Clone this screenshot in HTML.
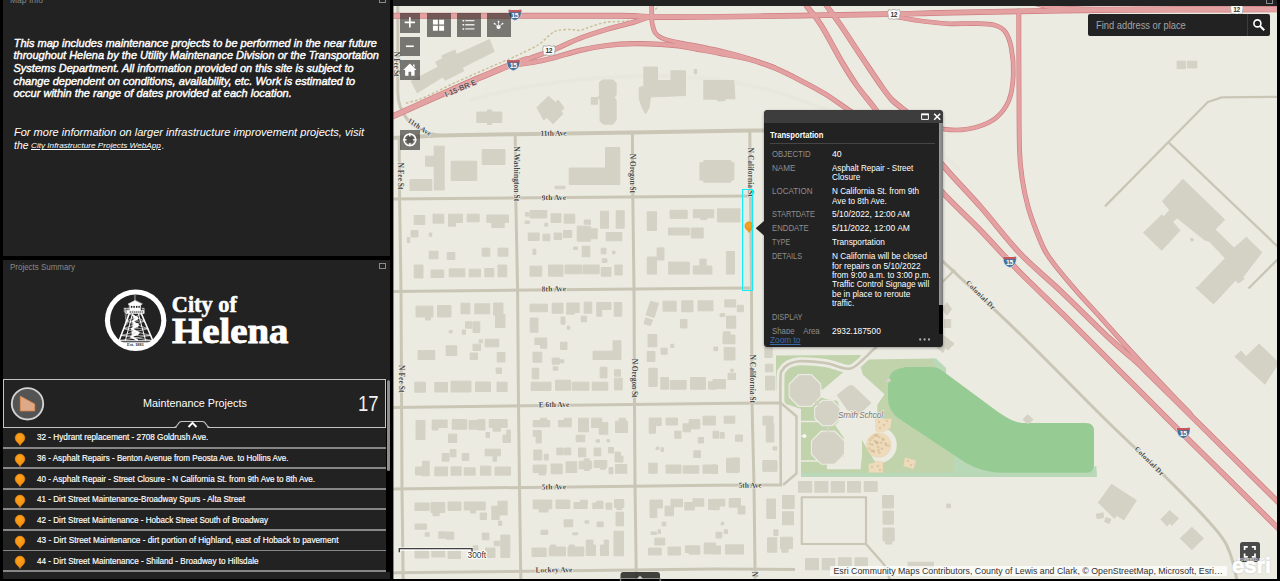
<!DOCTYPE html><html><head><meta charset="utf-8"><title>Maintenance Projects</title>
<style>html,body{margin:0;padding:0}body{width:1280px;height:581px;background:#000;overflow:hidden;position:relative;font-family:"Liberation Sans",sans-serif}svg{display:block;overflow:hidden}</style></head><body>
<div style="position:absolute;left:3px;top:0;width:387px;height:256.4px;background:#222222;overflow:hidden"></div>
<div style="position:absolute;left:3px;top:260px;width:387px;height:318.5px;background:#222222"></div>
<div style="position:absolute;left:379px;top:263px;width:5px;height:3.5px;border:1px solid #8a8a8a;border-top-width:1.6px"></div>
<div style="position:absolute;left:379px;top:-4px;width:5px;height:5px;border:1px solid #8a8a8a"></div>
<svg style="position:absolute;left:100px;top:284px" width="72" height="72" viewBox="0 0 581 581">
<defs><clipPath id="lc"><rect x="0" y="0" width="581" height="470"/></clipPath></defs>
<circle cx="287.5" cy="292.5" r="248" fill="#fff"/>
<circle cx="287.5" cy="292.5" r="207" fill="#222" clip-path="url(#lc)"/>
<g stroke="#fff" fill="none" stroke-linecap="round" stroke-linejoin="round">
<path d="M282 92V140" stroke-width="5"/>
<path d="M282 133L226 162L240 171H326L340 162Z" fill="#fff" stroke-width="4"/>
<path d="M238 170H328V216H238Z" fill="#fff" stroke-width="3"/>
<path d="M214 214H354V238H214Z" fill="#fff" stroke-width="4"/>
<path d="M196 196H236M196 196V226L214 238M206 198V232M218 198V214M340 196H356V236M346 198V214M228 198V214" stroke-width="5"/>
<path d="M203 240L212 330M216 240L222 322" stroke-width="4"/>
<path d="M236 240L155 456M334 240L426 456" stroke-width="13"/>
<path d="M262 240L205 456M310 240L368 456" stroke-width="8"/>
<path d="M213 300H360M190 360H386M170 415H409" stroke-width="4"/><path d="M150 458H432" stroke-width="8"/>
<path d="M236 240L360 300M334 240L213 300M213 300L386 360M360 300L190 360M190 360L409 415M386 360L170 415M170 415L426 456M409 415L155 456" stroke-width="5"/>
<path d="M266 252L302 276L262 302L306 332L256 362L312 396L250 426L300 452" stroke-width="15"/>
<path d="M270 262h34v30h-34zM262 318h46v34h-46zM256 378h52v36h-52z" fill="#fff" stroke-width="2" opacity=".9"/>
</g>
<g fill="#222"><rect x="249" y="177" width="12" height="15"/><rect x="269" y="177" width="12" height="15"/><rect x="290" y="177" width="12" height="15"/><rect x="310" y="177" width="11" height="15"/>
<rect x="240" y="220" width="8" height="12"/><rect x="256" y="220" width="8" height="12"/><rect x="272" y="220" width="8" height="12"/><rect x="288" y="220" width="8" height="12"/><rect x="304" y="220" width="8" height="12"/><rect x="320" y="220" width="8" height="12"/><rect x="336" y="220" width="8" height="12"/></g>
</svg>
<div style="position:absolute;left:3px;top:378.8px;width:383px;height:48.8px;border:1.2px solid #c4c4c4;box-sizing:border-box;background:#222"></div>
<div style="position:absolute;left:386px;top:380px;width:4px;height:191.5px;background:#000"></div>
<div style="position:absolute;left:386.5px;top:380px;width:3.2px;height:90.5px;background:#8c8c8c;border-radius:1.5px"></div>
<svg style="position:absolute;left:9px;top:385px" width="38" height="38" viewBox="9 385 38 38">
<circle cx="27.5" cy="403.8" r="15.7" fill="#545454" stroke="#d2d2d2" stroke-width="1.9"/>
<path d="M20.3 396.2L34.7 404V410.9H20.3Z" fill="#dcaa8b" stroke="#e08b48" stroke-width="0.9" stroke-linejoin="round"/>
</svg>
<svg style="position:absolute;left:173px;top:419px" width="38" height="11" viewBox="173 419 38 11">
<path d="M174.6 428.6C178.4 428.6 177 421.5 181.6 421.5H202.4C207 421.5 205.6 428.6 209.4 428.6Z" fill="#222"/>
<path d="M174.2 427.4C178.4 427.4 177 421.5 181.6 421.5H202.4C207 421.5 205.6 427.4 209.8 427.4" fill="none" stroke="#c4c4c4" stroke-width="1.1"/>
<path d="M188.5 427L192.5 422.9L196.5 427" fill="none" stroke="#fff" stroke-width="1.9"/>
</svg>
<div style="position:absolute;left:3px;top:446.75px;width:383px;height:1.9px;background:#878787"></div>
<svg style="position:absolute;left:13.00px;top:431.10px" width="14.00" height="16.00" viewBox="-7 -7 14 16"><defs><radialGradient id="pg" cx="45%" cy="30%" r="75%"><stop offset="0" stop-color="#ffa31f"/><stop offset="1" stop-color="#f18a06"/></radialGradient></defs><path d="M0 7.7C-1 4.9 -4.9 3.7 -4.9 0A4.9 4.9 0 1 1 4.9 0C4.9 3.7 1 4.9 0 7.7Z" fill="url(#pg)" stroke="#e08310" stroke-width="0.5"/></svg>
<div style="position:absolute;left:3px;top:467.30px;width:383px;height:1.9px;background:#878787"></div>
<svg style="position:absolute;left:13.00px;top:451.65px" width="14.00" height="16.00" viewBox="-7 -7 14 16"><defs><radialGradient id="pg" cx="45%" cy="30%" r="75%"><stop offset="0" stop-color="#ffa31f"/><stop offset="1" stop-color="#f18a06"/></radialGradient></defs><path d="M0 7.7C-1 4.9 -4.9 3.7 -4.9 0A4.9 4.9 0 1 1 4.9 0C4.9 3.7 1 4.9 0 7.7Z" fill="url(#pg)" stroke="#e08310" stroke-width="0.5"/></svg>
<div style="position:absolute;left:3px;top:487.85px;width:383px;height:1.9px;background:#878787"></div>
<svg style="position:absolute;left:13.00px;top:472.20px" width="14.00" height="16.00" viewBox="-7 -7 14 16"><defs><radialGradient id="pg" cx="45%" cy="30%" r="75%"><stop offset="0" stop-color="#ffa31f"/><stop offset="1" stop-color="#f18a06"/></radialGradient></defs><path d="M0 7.7C-1 4.9 -4.9 3.7 -4.9 0A4.9 4.9 0 1 1 4.9 0C4.9 3.7 1 4.9 0 7.7Z" fill="url(#pg)" stroke="#e08310" stroke-width="0.5"/></svg>
<div style="position:absolute;left:3px;top:508.40px;width:383px;height:1.9px;background:#878787"></div>
<svg style="position:absolute;left:13.00px;top:492.75px" width="14.00" height="16.00" viewBox="-7 -7 14 16"><defs><radialGradient id="pg" cx="45%" cy="30%" r="75%"><stop offset="0" stop-color="#ffa31f"/><stop offset="1" stop-color="#f18a06"/></radialGradient></defs><path d="M0 7.7C-1 4.9 -4.9 3.7 -4.9 0A4.9 4.9 0 1 1 4.9 0C4.9 3.7 1 4.9 0 7.7Z" fill="url(#pg)" stroke="#e08310" stroke-width="0.5"/></svg>
<div style="position:absolute;left:3px;top:528.95px;width:383px;height:1.9px;background:#878787"></div>
<svg style="position:absolute;left:13.00px;top:513.30px" width="14.00" height="16.00" viewBox="-7 -7 14 16"><defs><radialGradient id="pg" cx="45%" cy="30%" r="75%"><stop offset="0" stop-color="#ffa31f"/><stop offset="1" stop-color="#f18a06"/></radialGradient></defs><path d="M0 7.7C-1 4.9 -4.9 3.7 -4.9 0A4.9 4.9 0 1 1 4.9 0C4.9 3.7 1 4.9 0 7.7Z" fill="url(#pg)" stroke="#e08310" stroke-width="0.5"/></svg>
<div style="position:absolute;left:3px;top:549.50px;width:383px;height:1.9px;background:#878787"></div>
<svg style="position:absolute;left:13.00px;top:533.85px" width="14.00" height="16.00" viewBox="-7 -7 14 16"><defs><radialGradient id="pg" cx="45%" cy="30%" r="75%"><stop offset="0" stop-color="#ffa31f"/><stop offset="1" stop-color="#f18a06"/></radialGradient></defs><path d="M0 7.7C-1 4.9 -4.9 3.7 -4.9 0A4.9 4.9 0 1 1 4.9 0C4.9 3.7 1 4.9 0 7.7Z" fill="url(#pg)" stroke="#e08310" stroke-width="0.5"/></svg>
<div style="position:absolute;left:3px;top:570.05px;width:383px;height:1.9px;background:#878787"></div>
<svg style="position:absolute;left:13.00px;top:554.40px" width="14.00" height="16.00" viewBox="-7 -7 14 16"><defs><radialGradient id="pg" cx="45%" cy="30%" r="75%"><stop offset="0" stop-color="#ffa31f"/><stop offset="1" stop-color="#f18a06"/></radialGradient></defs><path d="M0 7.7C-1 4.9 -4.9 3.7 -4.9 0A4.9 4.9 0 1 1 4.9 0C4.9 3.7 1 4.9 0 7.7Z" fill="url(#pg)" stroke="#e08310" stroke-width="0.5"/></svg>
<span style="position:absolute;left:10.00px;top:-3.80px;white-space:pre;font-family:'Liberation Sans',sans-serif;font-size:8.5px;line-height:8.5px;font-weight:400;font-style:normal;color:#858585;">Map Info</span>
<span style="position:absolute;left:10.00px;top:263.00px;white-space:pre;font-family:'Liberation Sans',sans-serif;font-size:8.5px;line-height:8.5px;font-weight:400;font-style:normal;color:#898989;transform:scaleX(0.9361);transform-origin:0 0;">Projects Summary</span>
<span style="position:absolute;left:13.75px;top:37.59px;white-space:pre;font-family:'Liberation Sans',sans-serif;font-size:11px;line-height:11px;font-weight:400;font-style:italic;color:#fff;-webkit-text-stroke:0.42px #fff;">This map includes maintenance projects to be performed in the near future</span>
<span style="position:absolute;left:13.50px;top:50.39px;white-space:pre;font-family:'Liberation Sans',sans-serif;font-size:11px;line-height:11px;font-weight:400;font-style:italic;color:#fff;-webkit-text-stroke:0.42px #fff;">throughout Helena by the Utility Maintenance Division or the Transportation</span>
<span style="position:absolute;left:13.50px;top:62.99px;white-space:pre;font-family:'Liberation Sans',sans-serif;font-size:11px;line-height:11px;font-weight:400;font-style:italic;color:#fff;-webkit-text-stroke:0.42px #fff;">Systems Department. All information provided on this site is subject to</span>
<span style="position:absolute;left:13.50px;top:75.69px;white-space:pre;font-family:'Liberation Sans',sans-serif;font-size:11px;line-height:11px;font-weight:400;font-style:italic;color:#fff;-webkit-text-stroke:0.42px #fff;">change dependent on conditions, availability, etc. Work is estimated to</span>
<span style="position:absolute;left:13.50px;top:88.39px;white-space:pre;font-family:'Liberation Sans',sans-serif;font-size:11px;line-height:11px;font-weight:400;font-style:italic;color:#fff;-webkit-text-stroke:0.42px #fff;">occur within the range of dates provided at each location.</span>
<span style="position:absolute;left:13.75px;top:127.21px;white-space:pre;font-family:'Liberation Sans',sans-serif;font-size:10.5px;line-height:10.5px;font-weight:400;font-style:italic;color:#fff;transform:scaleX(1.0504);transform-origin:0 0;">For more information on larger infrastructure improvement projects, visit</span>
<span style="position:absolute;left:13.75px;top:140.01px;white-space:pre;font-family:'Liberation Sans',sans-serif;font-size:10.5px;line-height:10.5px;font-weight:400;font-style:italic;color:#fff;transform:scaleX(0.9857);transform-origin:0 0;">the</span>
<span style="position:absolute;left:31.25px;top:142.13px;white-space:pre;font-family:'Liberation Sans',sans-serif;font-size:8px;line-height:8px;font-weight:400;font-style:italic;color:#fff;transform:scaleX(1.0219);transform-origin:0 0;text-decoration:underline;text-underline-offset:1px;">City Infrastructure Projects WebApp</span>
<span style="position:absolute;left:161.60px;top:140.01px;white-space:pre;font-family:'Liberation Sans',sans-serif;font-size:10.5px;line-height:10.5px;font-weight:400;font-style:italic;color:#fff;transform:scaleX(0.6845);transform-origin:0 0;">.</span>
<span style="position:absolute;left:127.20px;top:343.45px;white-space:pre;font-family:'Liberation Serif',serif;font-size:4.6px;line-height:4.6px;font-weight:700;font-style:normal;color:#222;transform:scaleX(0.9399);transform-origin:0 0;">Est. 1881</span>
<span style="position:absolute;left:171.80px;top:294.07px;white-space:pre;font-family:'Liberation Serif',serif;font-size:22.3px;line-height:22.3px;font-weight:700;font-style:normal;color:#fff;-webkit-text-stroke:0.55px #fff;">City of</span>
<span style="position:absolute;left:172.00px;top:312.60px;white-space:pre;font-family:'Liberation Serif',serif;font-size:36px;line-height:36px;font-weight:700;font-style:normal;color:#fff;transform:scaleX(1.0779);transform-origin:0 0;-webkit-text-stroke:0.9px #fff;">Helena</span>
<span style="position:absolute;left:143.00px;top:398.03px;white-space:pre;font-family:'Liberation Sans',sans-serif;font-size:11.3px;line-height:11.3px;font-weight:400;font-style:normal;color:#fff;transform:scaleX(0.9554);transform-origin:0 0;">Maintenance Projects</span>
<span style="position:absolute;left:357.70px;top:392.55px;white-space:pre;font-family:'Liberation Sans',sans-serif;font-size:21.2px;line-height:21.2px;font-weight:400;font-style:normal;color:#f0f0f0;transform:scaleX(0.8737);transform-origin:0 0;">17</span>
<span style="position:absolute;left:36.50px;top:433.48px;white-space:pre;font-family:'Liberation Sans',sans-serif;font-size:9px;line-height:9px;font-weight:400;font-style:normal;color:#fff;transform:scaleX(0.9091);transform-origin:0 0;-webkit-text-stroke:0.18px #fff;">32 - Hydrant replacement - 2708 Goldrush Ave.</span>
<span style="position:absolute;left:36.50px;top:454.03px;white-space:pre;font-family:'Liberation Sans',sans-serif;font-size:9px;line-height:9px;font-weight:400;font-style:normal;color:#fff;transform:scaleX(0.8980);transform-origin:0 0;-webkit-text-stroke:0.18px #fff;">36 - Asphalt Repairs - Benton Avenue from Peosta Ave. to Hollins Ave.</span>
<span style="position:absolute;left:36.50px;top:474.58px;white-space:pre;font-family:'Liberation Sans',sans-serif;font-size:9px;line-height:9px;font-weight:400;font-style:normal;color:#fff;transform:scaleX(0.9016);transform-origin:0 0;-webkit-text-stroke:0.18px #fff;">40 - Asphalt Repair - Street Closure - N California St. from 9th Ave to 8th Ave.</span>
<span style="position:absolute;left:36.50px;top:495.13px;white-space:pre;font-family:'Liberation Sans',sans-serif;font-size:9px;line-height:9px;font-weight:400;font-style:normal;color:#fff;transform:scaleX(0.9000);transform-origin:0 0;-webkit-text-stroke:0.18px #fff;">41 - Dirt Street Maintenance-Broadway Spurs - Alta Street</span>
<span style="position:absolute;left:36.50px;top:515.68px;white-space:pre;font-family:'Liberation Sans',sans-serif;font-size:9px;line-height:9px;font-weight:400;font-style:normal;color:#fff;transform:scaleX(0.9018);transform-origin:0 0;-webkit-text-stroke:0.18px #fff;">42 - Dirt Street Maintenance - Hoback Street South of Broadway</span>
<span style="position:absolute;left:36.50px;top:536.23px;white-space:pre;font-family:'Liberation Sans',sans-serif;font-size:9px;line-height:9px;font-weight:400;font-style:normal;color:#fff;transform:scaleX(0.9187);transform-origin:0 0;-webkit-text-stroke:0.18px #fff;">43 - Dirt Street Maintenance - dirt portion of Highland, east of Hoback to pavement</span>
<span style="position:absolute;left:36.50px;top:556.78px;white-space:pre;font-family:'Liberation Sans',sans-serif;font-size:9px;line-height:9px;font-weight:400;font-style:normal;color:#fff;transform:scaleX(0.9036);transform-origin:0 0;-webkit-text-stroke:0.18px #fff;">44 - Dirt Street Maintenance - Shiland - Broadway to Hillsdale</span>
<div style="position:absolute;left:393px;top:0;width:884px;height:6px;background:#222"></div>
<div style="position:absolute;left:1266px;top:-3px;width:5px;height:5px;border:1px solid #8a8a8a"></div>
<svg style="position:absolute;left:393px;top:6px" width="884" height="572.5" viewBox="393 6 884 572.5">
<rect x="393" y="0" width="900" height="600" fill="#ecebe2"/>
<g stroke="#e6e5db" stroke-width="4" fill="none" opacity=".55"><path d="M470 100C560 75 700 62 800 100S930 140 960 170"/></g>
<path d="M776.0 355.5L860.0 355.0L866.0 359.5L933.0 358.5L940.0 372.0L1000.0 416.0L1020.0 428.0L1090.0 428.0L1090.0 470.0L1096.5 471.0L1096.5 476.8L801.0 476.8L801.0 409.0L786.0 404.0L780.0 396.0L776.0 390.0Z" fill="#c0d3ab"/>
<path d="M953.5 452L980 468H1088L1096.5 466V476.8H953.5Z" fill="#b9d8b8"/><rect x="801" y="472.6" width="295.5" height="4.2" fill="#b9d8b8"/>
<path d="M931 358.5L936 358.5L946 368L946 376L938 370Z" fill="#b9d8b8"/>
<path d="M888 386Q888 372 898 369L906 367H931Q938 367 944 372L990 406Q1012 423 1022 423H1086Q1094 423 1094 431V465Q1094 472.7 1086 472.7H1000Q982 472 966 463L898 418Q888 410 888 398Z" fill="#97cb94"/>
<path d="M859.4 362.4L862.9 374.7L884.5 394.2L877.3 404.9L877.3 418.9L875.7 429.8L866.4 437.9L862.9 447.2L866.4 455.3L861.7 457.6L860.6 469.2L826.9 469.2L826.9 464.6L843.9 456.5L843.9 437.9L835.0 425.1L838.5 421.6L839.2 405.8L837.3 400.7L828.1 399.6L819.9 397.3L817.6 391.4L823.4 389.1L839.7 375.2L846.6 369.4Z" fill="#ecebe2"/>
<path d="M800.5 421.6H826M800.5 461H827M800.5 436.2H805" stroke="#ecebe2" stroke-width="1.5" fill="none"/>
<path d="M819.8 396.6L811.1 405.3L798.9 405.3L790.2 396.6L790.2 384.4L798.9 375.7L811.1 375.7L819.8 384.4Z" fill="none" stroke="#ecebe2" stroke-width="3.2" stroke-linejoin="round"/>
<path d="M838.9 417.8L832.1 424.6L822.5 424.6L815.7 417.8L815.7 408.2L822.5 401.4L832.1 401.4L838.9 408.2Z" fill="none" stroke="#ecebe2" stroke-width="3.2" stroke-linejoin="round"/>
<path d="M843.5 454.1L834.4 463.2L821.6 463.2L812.5 454.1L812.5 441.3L821.6 432.2L834.4 432.2L843.5 441.3Z" fill="none" stroke="#ecebe2" stroke-width="3.2" stroke-linejoin="round"/>
<circle cx="878.8" cy="445" r="18" fill="#ecebe2"/>
<path d="M862 440L862 470L880 470Z" fill="#c0d3ab"/>
<circle cx="878.8" cy="445" r="12.3" fill="#eddbbb" stroke="#e6d2ad" stroke-width=".5"/>
<path d="M875.0 418.7L891.7 418.7L890.5 428.0L884.0 431.5L876.0 431.3Z" fill="#eddbbb" stroke="#e6d2ad" stroke-width=".4"/>
<path d="M868.7 464.0L875.0 462.5L876.0 460.5L883.0 462.0L883.0 472.5L869.0 472.5Z" fill="#eddbbb" stroke="#e6d2ad" stroke-width=".4"/>
<path d="M905.0 457.5L916.0 460.5L913.5 469.0L903.5 466.0Z" fill="#eddbbb" stroke="#e6d2ad" stroke-width=".4"/>
<g fill="none" stroke="#c4a77c" stroke-width=".45"><circle cx="879.4" cy="452.7" r=".9"/><circle cx="873.2" cy="451.0" r=".9"/><circle cx="876.9" cy="443.1" r=".9"/><circle cx="888.4" cy="445.8" r=".9"/><circle cx="878.5" cy="450.1" r=".9"/><circle cx="886.0" cy="444.8" r=".9"/><circle cx="882.5" cy="438.8" r=".9"/><circle cx="876.2" cy="441.9" r=".9"/><circle cx="872.3" cy="437.7" r=".9"/><circle cx="869.9" cy="443.7" r=".9"/><circle cx="877.5" cy="442.7" r=".9"/><circle cx="879.2" cy="436.9" r=".9"/><circle cx="878.2" cy="446.8" r=".9"/><circle cx="883.6" cy="439.6" r=".9"/><circle cx="876.9" cy="435.3" r=".9"/><circle cx="876.5" cy="435.2" r=".9"/><circle cx="871.4" cy="450.8" r=".9"/><circle cx="869.3" cy="448.5" r=".9"/><circle cx="881.2" cy="442.7" r=".9"/><circle cx="882.0" cy="448.7" r=".9"/><circle cx="885.6" cy="443.5" r=".9"/><circle cx="874.8" cy="440.9" r=".9"/><circle cx="872.3" cy="444.7" r=".9"/><circle cx="874.0" cy="451.5" r=".9"/><circle cx="870.2" cy="440.0" r=".9"/><circle cx="874.6" cy="435.8" r=".9"/><circle cx="879" cy="422" r=".8"/><circle cx="884" cy="425" r=".8"/><circle cx="887" cy="421" r=".8"/><circle cx="880" cy="428" r=".8"/><circle cx="872" cy="467" r=".8"/><circle cx="878" cy="466" r=".8"/><circle cx="880" cy="470" r=".8"/><circle cx="908" cy="461" r=".8"/><circle cx="911" cy="465" r=".8"/></g>
<path d="M780.8 486.0C780.8 475.0 780.5 438.1 780.5 420.0C780.5 401.9 780.2 385.8 780.5 377.5C780.8 369.2 781.2 372.2 782.5 370.0C783.8 367.8 785.2 366.0 788.0 364.5C790.8 363.0 793.0 361.5 799.2 361.2C805.5 361.0 817.8 361.8 825.5 363.0C833.2 364.2 840.5 368.0 845.5 368.5C850.5 369.0 850.9 369.1 855.5 366.0C860.1 362.9 868.6 354.0 873.0 350.0C877.4 346.0 880.5 343.3 882.0 342.0" stroke="#ecebe2" stroke-width="8" fill="none"/>
<path d="M781.75 403.75L796.5 416.25V473.5L783 485" stroke="#ecebe2" stroke-width="5" fill="none"/>
<path d="M397.8 0V92C398 112 410 131 438.5 135.2" stroke="#c9c6b6" stroke-width="3.0" fill="none" stroke-linejoin="round"/>
<path d="M385.0 138.4L438.0 135.4L515.0 134.2L632.0 132.4L750.0 130.6L770.0 130.3" stroke="#c9c6b6" stroke-width="4.0" fill="none" stroke-linejoin="round"/>
<path d="M399.2 138.0L399.6 199.0L401.0 291.5L401.6 407.0L402.0 489.0L403.2 585.0" stroke="#c9c6b6" stroke-width="3.0" fill="none" stroke-linejoin="round"/>
<path d="M515.2 134.0L515.8 199.0L517.6 291.0L518.5 406.0L519.5 488.0L520.9 585.0" stroke="#c9c6b6" stroke-width="3.0" fill="none" stroke-linejoin="round"/>
<path d="M632.4 132.5L632.8 197.0L634.0 289.5L634.5 404.5L635.0 486.5L636.4 585.0" stroke="#c9c6b6" stroke-width="3.0" fill="none" stroke-linejoin="round"/>
<path d="M749.8 131.0L750.5 196.0L751.5 288.0L752.0 403.0L754.0 485.0L755.2 585.0" stroke="#c9c6b6" stroke-width="3.0" fill="none" stroke-linejoin="round"/>
<path d="M385.0 199.1L713.0 196.2L751.0 196.0" stroke="#c9c6b6" stroke-width="3.0" fill="none" stroke-linejoin="round"/>
<path d="M385.0 291.6L713.0 288.2L752.0 288.0" stroke="#c9c6b6" stroke-width="3.0" fill="none" stroke-linejoin="round"/>
<path d="M385.0 407.6L713.0 403.5L782.0 402.9" stroke="#c9c6b6" stroke-width="3.0" fill="none" stroke-linejoin="round"/>
<path d="M385.0 489.1L713.0 485.2L782.0 485.0" stroke="#c9c6b6" stroke-width="3.0" fill="none" stroke-linejoin="round"/>
<path d="M385.0 572.9L713.0 569.0L795.0 569.5" stroke="#c9c6b6" stroke-width="3.0" fill="none" stroke-linejoin="round"/>
<path d="M780.8 486.0C780.8 475.0 780.5 438.1 780.5 420.0C780.5 401.9 780.2 385.8 780.5 377.5C780.8 369.2 781.2 372.2 782.5 370.0C783.8 367.8 785.2 366.0 788.0 364.5C790.8 363.0 793.0 361.5 799.2 361.2C805.5 361.0 817.8 361.8 825.5 363.0C833.2 364.2 840.5 368.0 845.5 368.5C850.5 369.0 850.9 369.1 855.5 366.0C860.1 362.9 868.6 354.0 873.0 350.0C877.4 346.0 880.5 343.3 882.0 342.0" stroke="#c9c6b6" stroke-width="2.6" fill="none" stroke-linejoin="round"/>
<path d="M781.75 403.75L796.5 416.25V473.5L783 485" stroke="#c9c6b6" stroke-width="2.4" fill="none" stroke-linejoin="round"/>
<path d="M801.75 497.25H866V544H801.75Z" stroke="#c9c6b6" stroke-width="2.2" fill="none" stroke-linejoin="round"/>
<path d="M865.5 543.5L884.25 564.75L892 585" stroke="#c9c6b6" stroke-width="2.4" fill="none" stroke-linejoin="round"/>
<path d="M925.0 243.0C927.5 245.6 924.2 243.4 940.0 258.6C955.8 273.8 992.4 307.1 1020.0 334.0C1047.7 360.9 1081.4 396.0 1105.9 420.0C1130.4 444.0 1149.8 461.3 1166.9 478.2C1184.0 495.1 1198.8 510.6 1208.5 521.2C1218.2 531.8 1220.8 534.9 1225.0 542.0C1229.2 549.1 1231.3 556.8 1233.4 564.0C1235.5 571.2 1236.9 581.5 1237.6 585.0" stroke="#c9c6b6" stroke-width="3.0" fill="none" stroke-linejoin="round"/>
<path d="M954.8 269.8L938 286.5" stroke="#c9c6b6" stroke-width="2.2" fill="none" stroke-linejoin="round"/>
<path d="M1105 206.4L1207.9 102L1221.6 97.3L1290 96.7" stroke="#c9c6b6" stroke-width="2.3" fill="none" stroke-linejoin="round"/>
<path d="M1168.8 142.6L1290 258.4" stroke="#c9c6b6" stroke-width="2.3" fill="none" stroke-linejoin="round"/>
<path d="M1290 247L1248.5 288.5" stroke="#c9c6b6" stroke-width="2.3" fill="none" stroke-linejoin="round"/>
<path d="M406.0 103.2C408.4 102.5 416.0 100.6 420.7 98.9C425.4 97.2 429.2 95.2 434.4 92.8C439.6 90.3 445.9 86.9 451.7 84.2C457.4 81.5 463.8 78.8 468.9 76.5C474.0 74.2 478.0 72.5 482.6 70.5C487.2 68.5 492.4 66.1 496.4 64.4C500.4 62.7 502.8 61.8 506.7 60.1C510.6 58.4 514.7 56.8 520.0 54.2C525.3 51.6 533.3 48.0 538.5 44.6C543.7 41.2 547.7 36.3 551.0 33.9C554.3 31.5 555.0 31.1 558.3 30.3C561.6 29.6 567.3 29.4 570.9 29.4C574.5 29.4 576.5 30.8 579.8 30.3C583.1 29.9 586.1 28.1 590.6 26.7C595.1 25.3 601.1 23.1 606.8 22.2C612.5 21.3 619.4 21.8 624.8 21.3C630.2 20.9 636.7 19.8 639.1 19.5M655.3 9.6L660 4" stroke="#cbbf9b" stroke-width="1.45" stroke-dasharray="2.6 2" fill="none"/>
<path d="M434.2 146.2H444.2V190.0H434.2ZM425.5 156.2H434.8V166.2H425.5ZM410.0 179.5H431.8V190.5H410.0ZM451.2 161.2H476.8V180.5H451.2ZM482.2 149.5H505.0V164.5H482.2ZM605.5 147.5H619.8V184.5H605.5ZM569.2 168.0H606.0V184.5H569.2ZM555.0 186.2H565.0V188.8H555.0ZM414.2 215.5H424.8V224.5H414.2ZM433.0 214.2H443.8V223.2H433.0ZM448.5 214.2H462.5V222.5H448.5ZM448.5 222.0H455.5V226.2H448.5ZM467.2 214.2H479.2V221.8H467.2ZM486.8 215.0H508.5V222.5H486.8ZM491.8 222.0H504.2V227.5H491.8ZM411.0 230.5H418.0V237.0H411.0ZM407.2 237.5H409.8V242.5H407.2ZM429.2 233.0H431.8V236.2H429.2ZM429.2 251.2H438.0V258.8H429.2ZM447.2 252.5H454.8V259.5H447.2ZM482.2 248.2H489.8V256.2H482.2ZM498.0 248.2H508.0V256.2H498.0ZM530.0 210.5H546.8V218.0H530.0ZM551.0 213.8H561.0V222.5H551.0ZM564.2 214.2H574.8V223.2H564.2ZM600.5 211.2H608.5V228.2H600.5ZM616.2 210.8H624.2V228.2H616.2ZM577.2 226.2H590.5V241.2H577.2ZM590.0 228.8H597.2V238.8H590.0ZM606.2 232.5H621.8V240.8H606.2ZM528.2 233.0H539.2V240.5H528.2ZM543.0 234.2H549.8V240.8H543.0ZM554.2 233.0H561.8V239.5H554.2ZM563.5 230.5H571.8V237.5H563.5ZM582.2 246.2H589.8V256.8H582.2ZM584.2 220.0H590.5V224.2H584.2ZM525.5 212.5H528.8V216.2H525.5ZM525.0 221.0H529.5V223.5H525.0ZM544.8 223.2H547.8V226.2H544.8ZM601.2 248.2H606.0V253.8H601.2ZM573.5 247.0H577.5V249.5H573.5ZM533.0 249.2H535.8V254.5H533.0ZM602.2 258.8H607.0V262.5H602.2ZM612.5 251.2H615.0V253.8H612.5ZM414.2 265.0H423.0V278.0H414.2ZM431.0 270.0H443.8V277.5H431.0ZM449.2 268.8H464.8V276.8H449.2ZM469.2 269.2H480.5V276.8H469.2ZM484.8 268.5H493.8V276.8H484.8ZM498.0 265.0H506.8V276.8H498.0ZM530.0 266.2H541.8V276.2H530.0ZM548.5 265.0H563.0V276.2H548.5ZM565.0 265.0H581.8V273.8H565.0ZM583.0 265.0H599.2V273.8H583.0ZM601.2 267.5H611.0V276.2H601.2ZM614.8 265.0H622.2V275.0H614.8ZM416.0 306.2H433.0V317.0H416.0ZM425.5 316.5H430.5V320.0H425.5ZM437.5 305.5H451.0V317.0H437.5ZM461.0 303.2H469.8V313.8H461.0ZM474.8 303.8H489.8V313.8H474.8ZM493.5 303.0H503.0V315.0H493.5ZM495.5 314.5H505.0V327.5H495.5ZM465.5 321.8H471.8V328.2H465.5ZM473.0 321.8H479.8V332.5H473.0ZM449.2 330.5H452.2V333.0H449.2ZM462.2 330.0H465.5V334.2H462.2ZM479.2 339.8H482.5V342.8H479.2ZM485.2 339.2H498.8V346.8H485.2ZM473.0 344.2H480.5V350.5H473.0ZM446.2 345.8H456.8V355.5H446.2ZM470.2 353.0H477.5V359.5H470.2ZM418.0 350.5H434.8V359.5H418.0ZM497.2 352.5H505.0V362.0H497.2ZM496.2 368.0H501.5V373.5H496.2ZM414.8 382.2H425.5V392.2H414.8ZM434.8 382.5H447.5V392.0H434.8ZM451.0 381.2H471.0V392.0H451.0ZM475.5 382.0H490.5V391.5H475.5ZM497.0 382.2H507.2V391.5H497.0ZM530.0 304.2H547.5V311.8H530.0ZM552.2 303.2H563.0V313.2H552.2ZM566.8 303.0H579.2V312.5H566.8ZM566.8 312.0H574.2V314.2H566.8ZM584.2 302.2H591.8V313.2H584.2ZM596.8 302.5H611.0V309.5H596.8ZM596.8 309.0H601.8V316.2H596.8ZM614.2 302.5H621.8V316.2H614.2ZM561.0 317.0H565.0V324.2H561.0ZM581.2 316.2H586.5V321.8H581.2ZM530.2 318.0H538.0V332.2H530.2ZM567.2 326.2H569.8V329.2H567.2ZM534.8 338.0H546.8V344.5H534.8ZM540.5 344.0H546.8V348.2H540.5ZM560.5 342.2H567.0V349.5H560.5ZM613.0 340.8H621.0V359.5H613.0ZM593.0 351.2H613.5V359.5H593.0ZM533.0 352.2H541.8V362.2H533.0ZM552.2 358.0H559.2V364.2H552.2ZM559.2 359.8H563.8V362.8H559.2ZM553.2 366.8H557.8V370.2H553.2ZM532.2 368.2H538.8V378.8H532.2ZM600.2 367.2H607.0V378.0H600.2ZM614.5 369.8H620.5V376.2H614.5ZM614.5 378.2H622.2V390.0H614.5ZM531.2 382.2H551.0V390.5H531.2ZM555.5 380.2H570.5V390.2H555.5ZM572.2 382.2H589.0V390.2H572.2ZM592.2 382.2H607.8V390.2H592.2ZM663.0 301.2H676.2V311.2H663.0ZM681.8 300.8H693.0V311.8H681.8ZM698.0 300.8H713.0V310.8H698.0ZM680.5 319.5H687.0V328.0H680.5ZM648.0 334.5H656.8V346.8H648.0ZM661.0 348.2H667.2V354.2H661.0ZM670.8 344.2H673.8V347.5H670.8ZM647.2 351.5H655.0V361.5H647.2ZM648.8 368.2H657.2V386.5H648.8ZM660.8 377.5H668.5V389.2H660.8ZM670.2 380.5H686.2V389.2H670.2ZM690.5 377.5H705.5V389.2H690.5ZM708.5 381.8H715.5V389.2H708.5ZM416.0 420.5H425.0V439.5H416.0ZM432.2 420.0H447.2V427.5H432.2ZM432.2 427.0H438.0V430.0H432.2ZM452.2 419.5H466.8V429.2H452.2ZM469.0 420.5H479.2V429.2H469.0ZM478.0 419.5H485.0V430.0H478.0ZM489.2 419.5H507.2V427.5H489.2ZM493.0 427.0H500.5V431.2H493.0ZM448.5 434.2H456.8V442.5H448.5ZM486.0 432.5H489.5V437.5H486.0ZM503.0 435.0H510.5V442.5H503.0ZM506.8 430.0H510.5V434.2H506.8ZM450.2 449.5H456.0V456.8H450.2ZM442.2 453.5H449.0V461.2H442.2ZM462.2 453.5H468.8V460.5H462.2ZM485.2 449.2H500.5V455.8H485.2ZM493.0 455.8H496.5V461.2H493.0ZM422.5 461.2H429.2V475.8H422.5ZM415.5 467.0H423.0V475.0H415.5ZM434.8 467.0H447.5V475.8H434.8ZM451.0 466.8H461.2V475.2H451.0ZM464.2 467.8H475.2V475.2H464.2ZM480.5 466.2H490.8V475.2H480.5ZM495.0 467.0H510.5V475.2H495.0ZM533.2 420.5H549.8V426.8H533.2ZM540.5 418.2H546.8V421.2H540.5ZM558.5 420.5H571.2V426.8H558.5ZM564.2 418.2H571.2V421.2H564.2ZM578.5 418.2H588.5V431.8H578.5ZM591.5 418.2H601.8V427.5H591.5ZM599.2 422.5H607.8V434.2H599.2ZM615.5 421.2H627.5V432.5H615.5ZM619.2 418.2H625.5V422.5H619.2ZM533.2 430.5H541.2V436.2H533.2ZM536.0 435.8H541.2V443.0H536.0ZM576.2 435.2H584.8V441.8H576.2ZM596.0 439.8H599.5V442.2H596.0ZM607.0 439.5H609.5V442.0H607.0ZM533.8 450.0H541.8V460.0H533.8ZM544.2 454.2H548.2V460.0H544.2ZM556.8 448.0H563.2V454.8H556.8ZM564.5 448.0H570.8V454.8H564.5ZM578.5 448.0H585.8V456.8H578.5ZM594.0 448.0H600.8V455.8H594.0ZM608.5 447.5H613.5V453.0H608.5ZM615.0 452.0H620.5V462.0H615.0ZM619.2 456.2H623.0V462.0H619.2ZM533.2 465.0H546.2V472.5H533.2ZM539.2 472.0H545.5V475.0H539.2ZM551.0 464.0H562.2V473.8H551.0ZM566.0 461.8H576.8V472.5H566.0ZM579.2 461.2H591.8V468.8H579.2ZM584.2 458.8H589.2V470.5H584.2ZM594.2 460.5H606.8V467.5H594.2ZM600.5 466.2H605.5V469.2H600.5ZM609.0 467.5H613.0V473.8H609.0ZM615.5 464.5H626.8V473.2H615.5ZM649.2 418.0H661.2V425.5H649.2ZM649.2 425.0H655.5V433.2H649.2ZM666.0 418.0H677.5V425.0H666.0ZM689.2 419.5H699.8V428.8H689.2ZM683.0 423.8H690.5V431.8H683.0ZM703.0 416.2H715.5V425.0H703.0ZM674.8 431.2H681.0V438.2H674.8ZM693.8 450.8H700.5V457.5H693.8ZM648.8 463.2H657.2V473.2H648.8ZM666.0 465.0H681.0V473.2H666.0ZM683.2 465.8H698.8V473.2H683.2ZM703.0 465.0H715.5V473.2H703.0ZM656.0 447.2H659.0V449.5H656.0ZM661.0 447.8H663.5V451.5H661.0ZM698.2 437.5H703.5V443.0H698.2ZM415.0 503.0H429.2V510.5H415.0ZM431.0 502.5H444.8V512.5H431.0ZM433.0 512.0H439.2V515.8H433.0ZM448.0 502.0H461.0V510.5H448.0ZM464.2 502.0H485.2V510.0H464.2ZM470.5 509.5H475.5V513.0H470.5ZM498.0 501.2H507.2V515.0H498.0ZM491.8 506.2H499.2V519.5H491.8ZM480.2 513.0H486.5V519.5H480.2ZM498.5 521.0H501.8V525.5H498.5ZM415.0 524.0H426.5V529.2H415.0ZM425.2 532.8H429.2V536.2H425.2ZM438.8 531.8H445.5V538.2H438.8ZM446.5 532.0H453.8V539.2H446.5ZM482.2 533.0H489.0V539.8H482.2ZM494.2 541.2H499.8V545.8H494.2ZM533.2 500.0H551.8V508.8H533.2ZM539.2 508.2H548.0V512.0H539.2ZM556.0 500.0H569.8V508.5H556.0ZM574.0 502.5H587.2V508.5H574.0ZM580.5 500.2H587.2V503.8H580.5ZM592.8 503.0H603.0V508.5H592.8ZM596.8 501.2H603.0V503.8H596.8ZM606.0 503.0H611.8V509.2H606.0ZM614.5 499.5H623.8V507.5H614.5ZM616.8 507.0H621.8V509.5H616.8ZM616.0 512.2H623.5V525.8H616.0ZM564.0 519.8H572.8V526.8H564.0ZM585.0 520.8H588.8V523.2H585.0ZM597.0 522.0H603.2V526.8H597.0ZM541.0 530.2H547.8V534.5H541.0ZM572.8 532.8H577.8V534.8H572.8ZM650.0 500.0H662.5V508.0H650.0ZM650.0 507.5H656.8V517.5H650.0ZM671.0 499.2H682.5V506.8H671.0ZM665.0 506.2H673.5V515.8H665.0ZM693.0 498.8H703.8V506.2H693.0ZM684.8 502.5H694.2V510.0H684.8ZM708.5 499.5H715.5V509.5H708.5ZM662.2 522.0H665.8V525.8H662.2ZM651.0 532.0H656.5V534.5H651.0ZM658.0 529.8H660.5V533.5H658.0ZM654.8 538.2H664.8V545.0H654.8ZM415.0 549.2H428.8V558.0H415.0ZM431.8 550.0H444.8V557.0H431.8ZM448.0 550.0H460.5V558.5H448.0ZM485.5 548.0H495.0V557.5H485.5ZM500.8 535.0H509.8V557.5H500.8ZM473.0 545.8H478.0V550.0H473.0ZM532.0 548.0H546.2V556.5H532.0ZM549.2 547.0H565.5V555.8H549.2ZM550.5 545.0H555.5V547.5H550.5ZM568.0 547.0H583.8V556.0H568.0ZM569.2 545.0H574.2V547.5H569.2ZM586.2 540.0H593.0V555.5H586.2ZM591.8 545.0H595.5V555.5H591.8ZM600.5 545.0H608.5V555.5H600.5ZM604.2 540.0H608.5V545.5H604.2ZM614.0 531.2H623.5V555.8H614.0ZM648.5 548.0H661.2V555.0H648.5ZM668.0 547.0H680.5V555.0H668.0ZM685.5 545.8H699.8V552.5H685.5ZM689.2 552.0H699.8V554.2H689.2ZM704.2 543.0H715.5V553.8H704.2ZM699.9 162.7H733.9V180.1H699.9ZM703.8 160.6H730.9V182.2H703.8ZM647.2 211.8H656.5V230.5H647.2ZM670.1 210.3H687.2V218.4H670.1ZM693.3 209.7H713.7V217.8H693.3ZM700.8 217.2H706.8V219.6H700.8ZM717.4 208.8H740.0V222.0H717.4ZM668.6 228.0H689.3V235.0H668.6ZM691.2 228.0H703.2V238.0H691.2ZM657.1 247.9H664.0V260.0H657.1ZM647.2 257.0H656.5V274.1H647.2ZM668.6 262.1H689.3V274.1H668.6ZM699.9 259.1H706.2V266.6H699.9ZM693.3 266.0H711.9V274.1H693.3ZM726.4 251.5H734.5V274.1H726.4ZM764.8 347.5H772.2V357.5H764.8ZM765.5 364.2H773.0V371.8H765.5ZM765.5 376.2H774.8V390.0H765.5ZM763.0 416.2H773.0V425.0H763.0ZM766.2 423.8H773.8V442.0H766.2ZM773.0 446.8H776.8V450.0H773.0ZM763.0 460.5H776.8V471.2H763.0ZM723.0 335.0H735.0V343.8H723.0ZM724.2 347.5H735.0V360.0H724.2ZM728.0 373.2H735.5V379.5H728.0ZM713.0 379.5H725.5V388.8H713.0ZM714.2 347.0H717.5V350.0H714.2ZM724.2 416.2H734.8V423.2H724.2ZM713.0 431.2H718.5V438.2H713.0ZM720.0 432.5H724.2V438.2H720.0ZM735.5 435.0H742.5V441.2H735.5ZM726.8 458.2H738.8V472.0H726.8ZM713.0 465.0H717.5V472.5H713.0ZM798.5 481.5H811.8V492.2H798.5ZM814.8 481.5H828.0V492.2H814.8ZM831.2 481.5H844.5V492.2H831.2ZM847.5 481.5H860.5V492.2H847.5ZM864.2 481.5H877.2V491.5H864.2ZM882.5 495.5H893.5V508.0H882.5ZM883.0 511.0H893.5V524.2H883.0ZM883.0 528.0H894.2V541.0H883.0ZM885.5 540.5H891.8V544.0H885.5ZM782.5 495.5H794.2V508.5H782.5ZM782.5 511.8H793.5V524.8H782.5ZM766.8 499.0H775.5V518.5H766.8ZM773.8 529.8H778.0V535.5H773.8ZM767.5 537.8H776.8V552.2H767.5ZM780.5 537.2H792.5V548.5H780.5ZM781.8 548.0H788.0V552.2H781.8ZM805.5 558.5H818.5V569.8H805.5ZM822.2 558.5H834.8V569.8H822.2ZM838.5 557.8H851.2V566.0H838.5ZM855.0 557.8H867.5V566.0H855.0ZM908.0 562.2H933.5V567.2H908.0ZM946.8 504.0H950.5V507.8H946.8ZM713.0 499.2H724.8V506.0H713.0ZM713.0 505.5H719.2V509.8H713.0ZM729.2 498.5H740.5V507.2H729.2ZM738.0 506.0H745.0V514.0H738.0ZM725.5 544.8H743.5V554.0H725.5ZM713.0 546.0H720.5V554.0H713.0ZM716.0 532.2H721.8V538.0H716.0ZM724.2 529.8H727.5V533.5H724.2ZM721.2 522.2H723.8V524.8H721.2ZM726.8 461.0H739.2V472.2H726.8ZM733.0 458.0H739.2V461.5H733.0ZM713.0 465.5H717.5V473.5H713.0ZM763.0 462.2H776.8V471.0H763.0ZM764.2 460.5H769.2V463.0H764.2ZM724.8 299.8H735.7V307.0H724.8ZM737.3 305.3H743.4V311.8H737.3ZM720.0 313.7H724.8V316.6H720.0ZM726.5 316.1H735.7V328.2H726.5ZM723.4 331.8H730.1V337.8H723.4ZM714.0 347.5H717.6V350.6H714.0ZM730.8 369.2H733.3V371.6H730.8ZM411.2 81.1L438.2 67.0L435.6 62.0L442.7 58.4L441.7 55.8L454.8 50.0L456.8 54.4L489.5 39.5L494.2 51.5L462.3 67.5L463.7 71.0L445.1 80.3L443.0 76.8L417.2 92.8ZM476.8 112.0L487.5 112.0L487.5 110.0L491.8 110.0L491.8 112.0L501.8 112.0L501.8 122.5L491.8 122.5L491.8 124.5L487.5 124.5L487.5 122.5L476.8 122.5ZM536.8 107.5L548.5 96.2L555.5 102.5L558.0 100.0L564.2 108.0L561.0 111.2L563.0 113.8L553.0 123.8L546.8 117.5L543.8 120.0ZM599.2 82.5L602.5 80.0L613.0 80.0L616.2 83.0L616.2 95.0L614.2 97.5L616.2 100.0L616.2 120.0L613.0 124.2L603.0 124.2L600.0 120.8L600.0 100.0L598.0 97.5L599.5 95.0ZM591.2 97.5L597.5 97.5L597.5 104.2L591.2 104.2ZM643.8 67.0L657.5 67.0L657.5 80.5L671.0 80.5L671.0 70.8L685.5 70.8L685.5 95.5L650.5 97.0L649.2 107.5L645.5 113.8L642.2 107.5L639.2 98.8L639.2 87.5L643.8 86.2ZM694.2 69.5L696.8 69.5L696.8 73.8L694.2 73.8ZM703.8 80.5L733.8 80.5L735.0 98.8L725.0 98.8L725.0 100.8L717.5 100.8L717.5 99.2L703.8 99.2ZM1182.9 179.2L1224.7 219.6L1215.1 229.6L1234.1 248.0L1246.4 237.2L1261.9 252.4L1242.8 277.2L1244.3 278.7L1238.5 283.1L1235.5 280.2L1213.6 303.6L1196.6 288.1L1225.3 258.2L1209.2 241.3L1204.8 240.1L1177.0 217.9L1172.6 221.7L1180.0 230.4L1161.8 250.3L1143.4 232.8L1161.8 214.9L1163.9 216.7L1169.7 210.0L1162.4 201.2ZM1190.2 239.2L1192.2 238.0L1193.7 240.1L1191.7 241.5ZM1177.1 61.2L1185.4 61.2L1185.4 68.7L1177.1 68.7ZM1187.4 61.2L1196.9 61.2L1196.9 67.9L1187.4 67.9ZM1195.8 287.5L1228.5 287.5L1213.4 303.8ZM1234.8 356.6L1241.0 351.0L1246.1 356.6L1259.1 344.0L1278.7 362.8L1264.9 384.2ZM1027.5 414.8L1032.6 419.4L1027.5 423.9L1023.0 419.4ZM1111.5 484.3L1136.4 500.4L1123.9 519.8L1117.0 515.6L1114.2 518.4L1098.4 502.6ZM1169.7 510.6L1178.5 518.4L1171.9 525.3L1169.7 523.1L1166.9 525.9L1160.8 519.2ZM1191.8 527.3L1203.5 538.3L1191.8 549.7L1180.2 538.3ZM1096.2 514.2L1103.1 512.8L1103.7 517.6L1097.1 518.7ZM1105.9 517.6L1110.9 519.2L1109.2 523.4L1104.5 521.7ZM650.5 301.2L658.5 303.2L654.2 317.5L646.0 315.0ZM645.5 318.0L652.5 320.0L650.5 325.5L644.2 323.8ZM943.0 335.0L954.2 343.8L948.0 350.0L945.5 347.5L943.0 352.5L936.8 347.5ZM1028.0 415.0L1033.0 419.5L1028.5 423.8L1023.8 419.5ZM885.5 380.0L889.2 378.0L891.0 380.8L887.2 383.0ZM942.0 309.0L947.0 302.5L951.5 309.0L947.0 315.5ZM944.5 319.5L950.7 319.5L950.7 327.5L944.5 327.5ZM819.8 396.6L811.1 405.3L798.9 405.3L790.2 396.6L790.2 384.4L798.9 375.7L811.1 375.7L819.8 384.4ZM838.9 417.8L832.1 424.6L822.5 424.6L815.7 417.8L815.7 408.2L822.5 401.4L832.1 401.4L838.9 408.2ZM843.5 454.1L834.4 463.2L821.6 463.2L812.5 454.1L812.5 441.3L821.6 432.2L834.4 432.2L843.5 441.3ZM837.2 395.0L849.2 385.8L853.0 385.8L871.0 403.0L858.0 415.0L853.0 410.0L848.0 410.5Z" fill="none" stroke="#cbc8bb" stroke-width=".7" stroke-linejoin="round"/>
<path d="M434.2 146.2H444.2V190.0H434.2ZM425.5 156.2H434.8V166.2H425.5ZM410.0 179.5H431.8V190.5H410.0ZM451.2 161.2H476.8V180.5H451.2ZM482.2 149.5H505.0V164.5H482.2ZM605.5 147.5H619.8V184.5H605.5ZM569.2 168.0H606.0V184.5H569.2ZM555.0 186.2H565.0V188.8H555.0ZM414.2 215.5H424.8V224.5H414.2ZM433.0 214.2H443.8V223.2H433.0ZM448.5 214.2H462.5V222.5H448.5ZM448.5 222.0H455.5V226.2H448.5ZM467.2 214.2H479.2V221.8H467.2ZM486.8 215.0H508.5V222.5H486.8ZM491.8 222.0H504.2V227.5H491.8ZM411.0 230.5H418.0V237.0H411.0ZM407.2 237.5H409.8V242.5H407.2ZM429.2 233.0H431.8V236.2H429.2ZM429.2 251.2H438.0V258.8H429.2ZM447.2 252.5H454.8V259.5H447.2ZM482.2 248.2H489.8V256.2H482.2ZM498.0 248.2H508.0V256.2H498.0ZM530.0 210.5H546.8V218.0H530.0ZM551.0 213.8H561.0V222.5H551.0ZM564.2 214.2H574.8V223.2H564.2ZM600.5 211.2H608.5V228.2H600.5ZM616.2 210.8H624.2V228.2H616.2ZM577.2 226.2H590.5V241.2H577.2ZM590.0 228.8H597.2V238.8H590.0ZM606.2 232.5H621.8V240.8H606.2ZM528.2 233.0H539.2V240.5H528.2ZM543.0 234.2H549.8V240.8H543.0ZM554.2 233.0H561.8V239.5H554.2ZM563.5 230.5H571.8V237.5H563.5ZM582.2 246.2H589.8V256.8H582.2ZM584.2 220.0H590.5V224.2H584.2ZM525.5 212.5H528.8V216.2H525.5ZM525.0 221.0H529.5V223.5H525.0ZM544.8 223.2H547.8V226.2H544.8ZM601.2 248.2H606.0V253.8H601.2ZM573.5 247.0H577.5V249.5H573.5ZM533.0 249.2H535.8V254.5H533.0ZM602.2 258.8H607.0V262.5H602.2ZM612.5 251.2H615.0V253.8H612.5ZM414.2 265.0H423.0V278.0H414.2ZM431.0 270.0H443.8V277.5H431.0ZM449.2 268.8H464.8V276.8H449.2ZM469.2 269.2H480.5V276.8H469.2ZM484.8 268.5H493.8V276.8H484.8ZM498.0 265.0H506.8V276.8H498.0ZM530.0 266.2H541.8V276.2H530.0ZM548.5 265.0H563.0V276.2H548.5ZM565.0 265.0H581.8V273.8H565.0ZM583.0 265.0H599.2V273.8H583.0ZM601.2 267.5H611.0V276.2H601.2ZM614.8 265.0H622.2V275.0H614.8ZM416.0 306.2H433.0V317.0H416.0ZM425.5 316.5H430.5V320.0H425.5ZM437.5 305.5H451.0V317.0H437.5ZM461.0 303.2H469.8V313.8H461.0ZM474.8 303.8H489.8V313.8H474.8ZM493.5 303.0H503.0V315.0H493.5ZM495.5 314.5H505.0V327.5H495.5ZM465.5 321.8H471.8V328.2H465.5ZM473.0 321.8H479.8V332.5H473.0ZM449.2 330.5H452.2V333.0H449.2ZM462.2 330.0H465.5V334.2H462.2ZM479.2 339.8H482.5V342.8H479.2ZM485.2 339.2H498.8V346.8H485.2ZM473.0 344.2H480.5V350.5H473.0ZM446.2 345.8H456.8V355.5H446.2ZM470.2 353.0H477.5V359.5H470.2ZM418.0 350.5H434.8V359.5H418.0ZM497.2 352.5H505.0V362.0H497.2ZM496.2 368.0H501.5V373.5H496.2ZM414.8 382.2H425.5V392.2H414.8ZM434.8 382.5H447.5V392.0H434.8ZM451.0 381.2H471.0V392.0H451.0ZM475.5 382.0H490.5V391.5H475.5ZM497.0 382.2H507.2V391.5H497.0ZM530.0 304.2H547.5V311.8H530.0ZM552.2 303.2H563.0V313.2H552.2ZM566.8 303.0H579.2V312.5H566.8ZM566.8 312.0H574.2V314.2H566.8ZM584.2 302.2H591.8V313.2H584.2ZM596.8 302.5H611.0V309.5H596.8ZM596.8 309.0H601.8V316.2H596.8ZM614.2 302.5H621.8V316.2H614.2ZM561.0 317.0H565.0V324.2H561.0ZM581.2 316.2H586.5V321.8H581.2ZM530.2 318.0H538.0V332.2H530.2ZM567.2 326.2H569.8V329.2H567.2ZM534.8 338.0H546.8V344.5H534.8ZM540.5 344.0H546.8V348.2H540.5ZM560.5 342.2H567.0V349.5H560.5ZM613.0 340.8H621.0V359.5H613.0ZM593.0 351.2H613.5V359.5H593.0ZM533.0 352.2H541.8V362.2H533.0ZM552.2 358.0H559.2V364.2H552.2ZM559.2 359.8H563.8V362.8H559.2ZM553.2 366.8H557.8V370.2H553.2ZM532.2 368.2H538.8V378.8H532.2ZM600.2 367.2H607.0V378.0H600.2ZM614.5 369.8H620.5V376.2H614.5ZM614.5 378.2H622.2V390.0H614.5ZM531.2 382.2H551.0V390.5H531.2ZM555.5 380.2H570.5V390.2H555.5ZM572.2 382.2H589.0V390.2H572.2ZM592.2 382.2H607.8V390.2H592.2ZM663.0 301.2H676.2V311.2H663.0ZM681.8 300.8H693.0V311.8H681.8ZM698.0 300.8H713.0V310.8H698.0ZM680.5 319.5H687.0V328.0H680.5ZM648.0 334.5H656.8V346.8H648.0ZM661.0 348.2H667.2V354.2H661.0ZM670.8 344.2H673.8V347.5H670.8ZM647.2 351.5H655.0V361.5H647.2ZM648.8 368.2H657.2V386.5H648.8ZM660.8 377.5H668.5V389.2H660.8ZM670.2 380.5H686.2V389.2H670.2ZM690.5 377.5H705.5V389.2H690.5ZM708.5 381.8H715.5V389.2H708.5ZM416.0 420.5H425.0V439.5H416.0ZM432.2 420.0H447.2V427.5H432.2ZM432.2 427.0H438.0V430.0H432.2ZM452.2 419.5H466.8V429.2H452.2ZM469.0 420.5H479.2V429.2H469.0ZM478.0 419.5H485.0V430.0H478.0ZM489.2 419.5H507.2V427.5H489.2ZM493.0 427.0H500.5V431.2H493.0ZM448.5 434.2H456.8V442.5H448.5ZM486.0 432.5H489.5V437.5H486.0ZM503.0 435.0H510.5V442.5H503.0ZM506.8 430.0H510.5V434.2H506.8ZM450.2 449.5H456.0V456.8H450.2ZM442.2 453.5H449.0V461.2H442.2ZM462.2 453.5H468.8V460.5H462.2ZM485.2 449.2H500.5V455.8H485.2ZM493.0 455.8H496.5V461.2H493.0ZM422.5 461.2H429.2V475.8H422.5ZM415.5 467.0H423.0V475.0H415.5ZM434.8 467.0H447.5V475.8H434.8ZM451.0 466.8H461.2V475.2H451.0ZM464.2 467.8H475.2V475.2H464.2ZM480.5 466.2H490.8V475.2H480.5ZM495.0 467.0H510.5V475.2H495.0ZM533.2 420.5H549.8V426.8H533.2ZM540.5 418.2H546.8V421.2H540.5ZM558.5 420.5H571.2V426.8H558.5ZM564.2 418.2H571.2V421.2H564.2ZM578.5 418.2H588.5V431.8H578.5ZM591.5 418.2H601.8V427.5H591.5ZM599.2 422.5H607.8V434.2H599.2ZM615.5 421.2H627.5V432.5H615.5ZM619.2 418.2H625.5V422.5H619.2ZM533.2 430.5H541.2V436.2H533.2ZM536.0 435.8H541.2V443.0H536.0ZM576.2 435.2H584.8V441.8H576.2ZM596.0 439.8H599.5V442.2H596.0ZM607.0 439.5H609.5V442.0H607.0ZM533.8 450.0H541.8V460.0H533.8ZM544.2 454.2H548.2V460.0H544.2ZM556.8 448.0H563.2V454.8H556.8ZM564.5 448.0H570.8V454.8H564.5ZM578.5 448.0H585.8V456.8H578.5ZM594.0 448.0H600.8V455.8H594.0ZM608.5 447.5H613.5V453.0H608.5ZM615.0 452.0H620.5V462.0H615.0ZM619.2 456.2H623.0V462.0H619.2ZM533.2 465.0H546.2V472.5H533.2ZM539.2 472.0H545.5V475.0H539.2ZM551.0 464.0H562.2V473.8H551.0ZM566.0 461.8H576.8V472.5H566.0ZM579.2 461.2H591.8V468.8H579.2ZM584.2 458.8H589.2V470.5H584.2ZM594.2 460.5H606.8V467.5H594.2ZM600.5 466.2H605.5V469.2H600.5ZM609.0 467.5H613.0V473.8H609.0ZM615.5 464.5H626.8V473.2H615.5ZM649.2 418.0H661.2V425.5H649.2ZM649.2 425.0H655.5V433.2H649.2ZM666.0 418.0H677.5V425.0H666.0ZM689.2 419.5H699.8V428.8H689.2ZM683.0 423.8H690.5V431.8H683.0ZM703.0 416.2H715.5V425.0H703.0ZM674.8 431.2H681.0V438.2H674.8ZM693.8 450.8H700.5V457.5H693.8ZM648.8 463.2H657.2V473.2H648.8ZM666.0 465.0H681.0V473.2H666.0ZM683.2 465.8H698.8V473.2H683.2ZM703.0 465.0H715.5V473.2H703.0ZM656.0 447.2H659.0V449.5H656.0ZM661.0 447.8H663.5V451.5H661.0ZM698.2 437.5H703.5V443.0H698.2ZM415.0 503.0H429.2V510.5H415.0ZM431.0 502.5H444.8V512.5H431.0ZM433.0 512.0H439.2V515.8H433.0ZM448.0 502.0H461.0V510.5H448.0ZM464.2 502.0H485.2V510.0H464.2ZM470.5 509.5H475.5V513.0H470.5ZM498.0 501.2H507.2V515.0H498.0ZM491.8 506.2H499.2V519.5H491.8ZM480.2 513.0H486.5V519.5H480.2ZM498.5 521.0H501.8V525.5H498.5ZM415.0 524.0H426.5V529.2H415.0ZM425.2 532.8H429.2V536.2H425.2ZM438.8 531.8H445.5V538.2H438.8ZM446.5 532.0H453.8V539.2H446.5ZM482.2 533.0H489.0V539.8H482.2ZM494.2 541.2H499.8V545.8H494.2ZM533.2 500.0H551.8V508.8H533.2ZM539.2 508.2H548.0V512.0H539.2ZM556.0 500.0H569.8V508.5H556.0ZM574.0 502.5H587.2V508.5H574.0ZM580.5 500.2H587.2V503.8H580.5ZM592.8 503.0H603.0V508.5H592.8ZM596.8 501.2H603.0V503.8H596.8ZM606.0 503.0H611.8V509.2H606.0ZM614.5 499.5H623.8V507.5H614.5ZM616.8 507.0H621.8V509.5H616.8ZM616.0 512.2H623.5V525.8H616.0ZM564.0 519.8H572.8V526.8H564.0ZM585.0 520.8H588.8V523.2H585.0ZM597.0 522.0H603.2V526.8H597.0ZM541.0 530.2H547.8V534.5H541.0ZM572.8 532.8H577.8V534.8H572.8ZM650.0 500.0H662.5V508.0H650.0ZM650.0 507.5H656.8V517.5H650.0ZM671.0 499.2H682.5V506.8H671.0ZM665.0 506.2H673.5V515.8H665.0ZM693.0 498.8H703.8V506.2H693.0ZM684.8 502.5H694.2V510.0H684.8ZM708.5 499.5H715.5V509.5H708.5ZM662.2 522.0H665.8V525.8H662.2ZM651.0 532.0H656.5V534.5H651.0ZM658.0 529.8H660.5V533.5H658.0ZM654.8 538.2H664.8V545.0H654.8ZM415.0 549.2H428.8V558.0H415.0ZM431.8 550.0H444.8V557.0H431.8ZM448.0 550.0H460.5V558.5H448.0ZM485.5 548.0H495.0V557.5H485.5ZM500.8 535.0H509.8V557.5H500.8ZM473.0 545.8H478.0V550.0H473.0ZM532.0 548.0H546.2V556.5H532.0ZM549.2 547.0H565.5V555.8H549.2ZM550.5 545.0H555.5V547.5H550.5ZM568.0 547.0H583.8V556.0H568.0ZM569.2 545.0H574.2V547.5H569.2ZM586.2 540.0H593.0V555.5H586.2ZM591.8 545.0H595.5V555.5H591.8ZM600.5 545.0H608.5V555.5H600.5ZM604.2 540.0H608.5V545.5H604.2ZM614.0 531.2H623.5V555.8H614.0ZM648.5 548.0H661.2V555.0H648.5ZM668.0 547.0H680.5V555.0H668.0ZM685.5 545.8H699.8V552.5H685.5ZM689.2 552.0H699.8V554.2H689.2ZM704.2 543.0H715.5V553.8H704.2ZM699.9 162.7H733.9V180.1H699.9ZM703.8 160.6H730.9V182.2H703.8ZM647.2 211.8H656.5V230.5H647.2ZM670.1 210.3H687.2V218.4H670.1ZM693.3 209.7H713.7V217.8H693.3ZM700.8 217.2H706.8V219.6H700.8ZM717.4 208.8H740.0V222.0H717.4ZM668.6 228.0H689.3V235.0H668.6ZM691.2 228.0H703.2V238.0H691.2ZM657.1 247.9H664.0V260.0H657.1ZM647.2 257.0H656.5V274.1H647.2ZM668.6 262.1H689.3V274.1H668.6ZM699.9 259.1H706.2V266.6H699.9ZM693.3 266.0H711.9V274.1H693.3ZM726.4 251.5H734.5V274.1H726.4ZM764.8 347.5H772.2V357.5H764.8ZM765.5 364.2H773.0V371.8H765.5ZM765.5 376.2H774.8V390.0H765.5ZM763.0 416.2H773.0V425.0H763.0ZM766.2 423.8H773.8V442.0H766.2ZM773.0 446.8H776.8V450.0H773.0ZM763.0 460.5H776.8V471.2H763.0ZM723.0 335.0H735.0V343.8H723.0ZM724.2 347.5H735.0V360.0H724.2ZM728.0 373.2H735.5V379.5H728.0ZM713.0 379.5H725.5V388.8H713.0ZM714.2 347.0H717.5V350.0H714.2ZM724.2 416.2H734.8V423.2H724.2ZM713.0 431.2H718.5V438.2H713.0ZM720.0 432.5H724.2V438.2H720.0ZM735.5 435.0H742.5V441.2H735.5ZM726.8 458.2H738.8V472.0H726.8ZM713.0 465.0H717.5V472.5H713.0ZM798.5 481.5H811.8V492.2H798.5ZM814.8 481.5H828.0V492.2H814.8ZM831.2 481.5H844.5V492.2H831.2ZM847.5 481.5H860.5V492.2H847.5ZM864.2 481.5H877.2V491.5H864.2ZM882.5 495.5H893.5V508.0H882.5ZM883.0 511.0H893.5V524.2H883.0ZM883.0 528.0H894.2V541.0H883.0ZM885.5 540.5H891.8V544.0H885.5ZM782.5 495.5H794.2V508.5H782.5ZM782.5 511.8H793.5V524.8H782.5ZM766.8 499.0H775.5V518.5H766.8ZM773.8 529.8H778.0V535.5H773.8ZM767.5 537.8H776.8V552.2H767.5ZM780.5 537.2H792.5V548.5H780.5ZM781.8 548.0H788.0V552.2H781.8ZM805.5 558.5H818.5V569.8H805.5ZM822.2 558.5H834.8V569.8H822.2ZM838.5 557.8H851.2V566.0H838.5ZM855.0 557.8H867.5V566.0H855.0ZM908.0 562.2H933.5V567.2H908.0ZM946.8 504.0H950.5V507.8H946.8ZM713.0 499.2H724.8V506.0H713.0ZM713.0 505.5H719.2V509.8H713.0ZM729.2 498.5H740.5V507.2H729.2ZM738.0 506.0H745.0V514.0H738.0ZM725.5 544.8H743.5V554.0H725.5ZM713.0 546.0H720.5V554.0H713.0ZM716.0 532.2H721.8V538.0H716.0ZM724.2 529.8H727.5V533.5H724.2ZM721.2 522.2H723.8V524.8H721.2ZM726.8 461.0H739.2V472.2H726.8ZM733.0 458.0H739.2V461.5H733.0ZM713.0 465.5H717.5V473.5H713.0ZM763.0 462.2H776.8V471.0H763.0ZM764.2 460.5H769.2V463.0H764.2ZM724.8 299.8H735.7V307.0H724.8ZM737.3 305.3H743.4V311.8H737.3ZM720.0 313.7H724.8V316.6H720.0ZM726.5 316.1H735.7V328.2H726.5ZM723.4 331.8H730.1V337.8H723.4ZM714.0 347.5H717.6V350.6H714.0ZM730.8 369.2H733.3V371.6H730.8ZM411.2 81.1L438.2 67.0L435.6 62.0L442.7 58.4L441.7 55.8L454.8 50.0L456.8 54.4L489.5 39.5L494.2 51.5L462.3 67.5L463.7 71.0L445.1 80.3L443.0 76.8L417.2 92.8ZM476.8 112.0L487.5 112.0L487.5 110.0L491.8 110.0L491.8 112.0L501.8 112.0L501.8 122.5L491.8 122.5L491.8 124.5L487.5 124.5L487.5 122.5L476.8 122.5ZM536.8 107.5L548.5 96.2L555.5 102.5L558.0 100.0L564.2 108.0L561.0 111.2L563.0 113.8L553.0 123.8L546.8 117.5L543.8 120.0ZM599.2 82.5L602.5 80.0L613.0 80.0L616.2 83.0L616.2 95.0L614.2 97.5L616.2 100.0L616.2 120.0L613.0 124.2L603.0 124.2L600.0 120.8L600.0 100.0L598.0 97.5L599.5 95.0ZM591.2 97.5L597.5 97.5L597.5 104.2L591.2 104.2ZM643.8 67.0L657.5 67.0L657.5 80.5L671.0 80.5L671.0 70.8L685.5 70.8L685.5 95.5L650.5 97.0L649.2 107.5L645.5 113.8L642.2 107.5L639.2 98.8L639.2 87.5L643.8 86.2ZM694.2 69.5L696.8 69.5L696.8 73.8L694.2 73.8ZM703.8 80.5L733.8 80.5L735.0 98.8L725.0 98.8L725.0 100.8L717.5 100.8L717.5 99.2L703.8 99.2ZM1182.9 179.2L1224.7 219.6L1215.1 229.6L1234.1 248.0L1246.4 237.2L1261.9 252.4L1242.8 277.2L1244.3 278.7L1238.5 283.1L1235.5 280.2L1213.6 303.6L1196.6 288.1L1225.3 258.2L1209.2 241.3L1204.8 240.1L1177.0 217.9L1172.6 221.7L1180.0 230.4L1161.8 250.3L1143.4 232.8L1161.8 214.9L1163.9 216.7L1169.7 210.0L1162.4 201.2ZM1190.2 239.2L1192.2 238.0L1193.7 240.1L1191.7 241.5ZM1177.1 61.2L1185.4 61.2L1185.4 68.7L1177.1 68.7ZM1187.4 61.2L1196.9 61.2L1196.9 67.9L1187.4 67.9ZM1195.8 287.5L1228.5 287.5L1213.4 303.8ZM1234.8 356.6L1241.0 351.0L1246.1 356.6L1259.1 344.0L1278.7 362.8L1264.9 384.2ZM1027.5 414.8L1032.6 419.4L1027.5 423.9L1023.0 419.4ZM1111.5 484.3L1136.4 500.4L1123.9 519.8L1117.0 515.6L1114.2 518.4L1098.4 502.6ZM1169.7 510.6L1178.5 518.4L1171.9 525.3L1169.7 523.1L1166.9 525.9L1160.8 519.2ZM1191.8 527.3L1203.5 538.3L1191.8 549.7L1180.2 538.3ZM1096.2 514.2L1103.1 512.8L1103.7 517.6L1097.1 518.7ZM1105.9 517.6L1110.9 519.2L1109.2 523.4L1104.5 521.7ZM650.5 301.2L658.5 303.2L654.2 317.5L646.0 315.0ZM645.5 318.0L652.5 320.0L650.5 325.5L644.2 323.8ZM943.0 335.0L954.2 343.8L948.0 350.0L945.5 347.5L943.0 352.5L936.8 347.5ZM1028.0 415.0L1033.0 419.5L1028.5 423.8L1023.8 419.5ZM885.5 380.0L889.2 378.0L891.0 380.8L887.2 383.0ZM942.0 309.0L947.0 302.5L951.5 309.0L947.0 315.5ZM944.5 319.5L950.7 319.5L950.7 327.5L944.5 327.5ZM819.8 396.6L811.1 405.3L798.9 405.3L790.2 396.6L790.2 384.4L798.9 375.7L811.1 375.7L819.8 384.4ZM838.9 417.8L832.1 424.6L822.5 424.6L815.7 417.8L815.7 408.2L822.5 401.4L832.1 401.4L838.9 408.2ZM843.5 454.1L834.4 463.2L821.6 463.2L812.5 454.1L812.5 441.3L821.6 432.2L834.4 432.2L843.5 441.3ZM837.2 395.0L849.2 385.8L853.0 385.8L871.0 403.0L858.0 415.0L853.0 410.0L848.0 410.5Z" fill="#d4d1c5"/>
<circle cx="804.5" cy="436" r="2" fill="#f7f6f0"/>
<path d="M815.5 401.5L819 405M828 426V431.5" stroke="#d4d1c5" stroke-width="2.6"/>
<path d="M380.0 15.7C410.0 15.7 520.0 15.7 560.0 15.7C600.0 15.7 607.7 15.8 620.0 15.8C632.3 15.9 630.2 15.9 634.0 16.0C637.8 16.1 640.0 16.4 643.0 16.6C646.0 16.8 650.5 16.9 652.0 17.0" stroke="#cd7d81" stroke-width="5.9" fill="none" stroke-linecap="round"/>
<path d="M648.0 17.0C656.7 17.0 674.7 17.2 700.0 17.0C725.3 16.8 768.8 16.1 800.0 15.6C831.2 15.1 863.7 14.6 887.0 14.2C910.3 13.8 917.8 13.4 940.0 12.9C962.2 12.4 993.3 11.8 1020.0 11.3C1046.7 10.8 1073.3 10.4 1100.0 10.1C1126.7 9.8 1148.3 9.8 1180.0 9.7C1211.7 9.6 1271.7 9.4 1290.0 9.4" stroke="#cd7d81" stroke-width="5.7" fill="none" stroke-linecap="round"/>
<path d="M1030.0 2.0C1033.3 2.8 1042.5 5.9 1050.0 7.0C1057.5 8.1 1066.7 8.3 1075.0 8.7C1083.3 9.1 1082.5 9.2 1100.0 9.2C1117.5 9.2 1148.3 8.9 1180.0 8.8C1211.7 8.7 1271.7 8.6 1290.0 8.5" stroke="#cd7d81" stroke-width="5.1" fill="none" stroke-linecap="round"/>
<path d="M380.0 121.6C382.2 120.7 386.7 119.0 393.0 116.2C399.3 113.5 409.7 108.8 418.0 105.0C426.3 101.2 433.4 98.0 443.0 93.8C452.6 89.5 467.7 82.9 475.5 79.5C483.3 76.1 483.7 75.9 490.0 73.3C496.3 70.7 507.4 66.2 513.4 63.9C519.4 61.6 523.9 60.1 526.0 59.4" stroke="#cd7d81" stroke-width="6.3" fill="none" stroke-linecap="round"/>
<path d="M513.4 64.0C517.0 62.8 528.4 58.8 535.0 56.5C541.6 54.2 545.5 53.0 553.0 50.0C560.5 47.0 570.8 41.7 579.8 38.3C588.8 34.9 597.8 32.1 606.8 29.4C615.8 26.7 627.2 24.1 633.8 22.2C640.3 20.3 643.3 18.8 646.3 17.9C649.3 17.0 651.0 16.8 652.0 16.6" stroke="#cd7d81" stroke-width="5.1" fill="none" stroke-linecap="round"/>
<path d="M513.4 65.0C517.0 64.5 528.4 63.2 535.0 62.0C541.6 60.8 545.5 59.9 553.0 58.0C560.5 56.1 570.8 52.5 579.8 50.4C588.8 48.3 597.8 46.6 606.8 45.5C615.8 44.4 624.8 43.9 633.8 43.7C642.7 43.5 653.2 43.9 660.7 44.3C668.2 44.7 672.7 45.1 678.7 45.9C684.7 46.7 689.7 47.9 696.6 49.1C703.5 50.4 711.1 51.6 720.0 53.4C728.9 55.1 740.8 57.1 750.0 59.6C759.2 62.1 766.7 64.8 775.0 68.2C783.3 71.6 791.7 75.9 800.0 80.2C808.3 84.5 816.7 88.8 825.0 93.9C833.3 99.0 840.8 104.8 850.0 111.0C859.2 117.2 870.8 124.8 880.0 131.0C889.2 137.2 900.8 145.2 905.0 148.0" stroke="#cd7d81" stroke-width="5.2" fill="none" stroke-linecap="round"/>
<path d="M651.7 0.0C651.7 3.0 651.7 14.0 651.8 18.0C651.9 22.0 651.7 21.5 652.3 24.0C652.9 26.5 653.6 30.6 655.3 33.0C657.0 35.4 658.6 36.7 662.5 38.3C666.4 39.9 672.5 41.2 678.7 42.6C685.0 44.0 692.3 45.0 700.0 46.6C707.7 48.2 716.7 50.0 725.0 52.0C733.3 54.0 741.7 56.3 750.0 58.9C758.3 61.5 770.8 66.1 775.0 67.6" stroke="#cd7d81" stroke-width="4.7" fill="none" stroke-linecap="round"/>
<path d="M823.0 0.0C823.8 1.2 824.6 2.8 827.5 7.0C830.4 11.2 834.8 16.6 840.5 25.0C846.2 33.4 855.0 47.1 862.0 57.5C869.0 67.9 877.2 80.3 882.3 87.5C887.4 94.7 888.9 96.7 892.5 100.5C896.1 104.3 899.4 105.1 904.0 110.5C908.6 115.9 913.5 123.8 920.0 133.0C926.5 142.2 932.7 152.9 943.0 165.4C953.3 177.9 968.8 193.3 981.6 208.0C994.4 222.7 1007.0 239.7 1020.0 253.4C1033.0 267.1 1044.7 275.8 1059.6 290.0C1074.5 304.2 1096.7 326.4 1109.5 338.4C1122.3 350.4 1129.7 355.8 1136.4 361.9C1143.2 368.0 1137.6 363.0 1150.0 375.3C1162.4 387.6 1189.8 414.7 1211.0 435.6C1232.2 456.6 1263.8 487.9 1277.0 501.0C1290.2 514.1 1287.8 511.8 1290.0 514.0" stroke="#cd7d81" stroke-width="5.6" fill="none" stroke-linecap="round"/>
<path d="M803.0 0.0C803.8 1.2 804.5 2.8 807.5 7.0C810.5 11.2 815.2 15.8 821.0 25.0C826.8 34.2 836.3 52.5 842.2 62.5C848.1 72.5 851.0 77.2 856.5 85.0C862.0 92.8 867.4 98.9 875.5 109.4C883.6 119.9 893.8 134.1 905.0 148.0C916.2 161.9 930.2 179.0 943.0 192.9C955.8 206.8 968.8 218.2 981.6 231.5C994.4 244.8 1006.1 258.3 1020.0 272.4C1033.9 286.5 1048.0 299.4 1064.8 316.0C1081.5 332.6 1101.8 353.1 1120.7 372.0C1139.6 390.9 1150.0 401.4 1178.2 429.4C1206.5 457.4 1271.4 521.6 1290.0 540.0" stroke="#cd7d81" stroke-width="5.6" fill="none" stroke-linecap="round"/>
<path d="M1018.8 11.0C1018.8 15.8 1018.8 26.8 1018.8 40.0C1018.8 53.2 1018.9 71.7 1019.0 90.0C1019.1 108.3 1019.0 135.2 1019.5 150.0C1020.0 164.8 1020.8 169.6 1022.2 179.0C1023.6 188.4 1025.7 198.2 1028.0 206.7C1030.3 215.2 1033.2 222.8 1036.0 230.0C1038.8 237.2 1041.7 244.4 1044.6 250.0C1047.5 255.6 1048.4 256.7 1053.6 263.4C1058.8 270.1 1068.5 281.7 1075.9 290.3C1083.4 298.9 1090.8 306.6 1098.3 314.9C1105.8 323.2 1114.9 333.6 1120.7 340.0C1126.5 346.4 1128.8 348.9 1133.0 353.5C1137.2 358.1 1140.5 361.7 1146.0 367.5C1151.5 373.3 1158.7 380.8 1166.0 388.5C1173.3 396.2 1186.0 409.3 1190.0 413.5" stroke="#cd7d81" stroke-width="4.9" fill="none" stroke-linecap="round"/>
<path d="M893.0 15.5C894.2 15.8 894.7 16.5 900.0 17.5C905.3 18.5 916.7 20.5 925.0 21.5C933.3 22.5 941.7 23.4 950.0 23.8C958.3 24.1 967.7 23.4 975.0 23.6C982.3 23.8 989.0 23.7 994.0 25.0C999.0 26.3 1002.1 27.7 1005.0 31.5C1007.9 35.3 1009.9 40.8 1011.3 48.0C1012.7 55.2 1013.7 66.3 1013.3 75.0C1012.9 83.7 1011.8 92.9 1009.0 100.0C1006.2 107.1 1001.8 113.0 996.5 117.5C991.2 122.0 983.9 124.9 977.0 127.0C970.1 129.1 962.0 130.0 955.0 130.0C948.0 130.0 941.7 129.2 935.0 127.0C928.3 124.8 920.7 120.3 915.0 117.0C909.3 113.7 904.7 109.8 901.0 107.0C897.3 104.2 894.3 101.6 893.0 100.5" stroke="#cd7d81" stroke-width="4.7" fill="none" stroke-linecap="round"/>
<path d="M380.0 15.7C410.0 15.7 520.0 15.7 560.0 15.7C600.0 15.7 607.7 15.8 620.0 15.8C632.3 15.9 630.2 15.9 634.0 16.0C637.8 16.1 640.0 16.4 643.0 16.6C646.0 16.8 650.5 16.9 652.0 17.0" stroke="#e4a1a1" stroke-width="4.6" fill="none" stroke-linecap="round"/>
<path d="M648.0 17.0C656.7 17.0 674.7 17.2 700.0 17.0C725.3 16.8 768.8 16.1 800.0 15.6C831.2 15.1 863.7 14.6 887.0 14.2C910.3 13.8 917.8 13.4 940.0 12.9C962.2 12.4 993.3 11.8 1020.0 11.3C1046.7 10.8 1073.3 10.4 1100.0 10.1C1126.7 9.8 1148.3 9.8 1180.0 9.7C1211.7 9.6 1271.7 9.4 1290.0 9.4" stroke="#e4a1a1" stroke-width="4.4" fill="none" stroke-linecap="round"/>
<path d="M1030.0 2.0C1033.3 2.8 1042.5 5.9 1050.0 7.0C1057.5 8.1 1066.7 8.3 1075.0 8.7C1083.3 9.1 1082.5 9.2 1100.0 9.2C1117.5 9.2 1148.3 8.9 1180.0 8.8C1211.7 8.7 1271.7 8.6 1290.0 8.5" stroke="#e4a1a1" stroke-width="3.8" fill="none" stroke-linecap="round"/>
<path d="M380.0 121.6C382.2 120.7 386.7 119.0 393.0 116.2C399.3 113.5 409.7 108.8 418.0 105.0C426.3 101.2 433.4 98.0 443.0 93.8C452.6 89.5 467.7 82.9 475.5 79.5C483.3 76.1 483.7 75.9 490.0 73.3C496.3 70.7 507.4 66.2 513.4 63.9C519.4 61.6 523.9 60.1 526.0 59.4" stroke="#e4a1a1" stroke-width="5.0" fill="none" stroke-linecap="round"/>
<path d="M513.4 64.0C517.0 62.8 528.4 58.8 535.0 56.5C541.6 54.2 545.5 53.0 553.0 50.0C560.5 47.0 570.8 41.7 579.8 38.3C588.8 34.9 597.8 32.1 606.8 29.4C615.8 26.7 627.2 24.1 633.8 22.2C640.3 20.3 643.3 18.8 646.3 17.9C649.3 17.0 651.0 16.8 652.0 16.6" stroke="#e4a1a1" stroke-width="3.8" fill="none" stroke-linecap="round"/>
<path d="M513.4 65.0C517.0 64.5 528.4 63.2 535.0 62.0C541.6 60.8 545.5 59.9 553.0 58.0C560.5 56.1 570.8 52.5 579.8 50.4C588.8 48.3 597.8 46.6 606.8 45.5C615.8 44.4 624.8 43.9 633.8 43.7C642.7 43.5 653.2 43.9 660.7 44.3C668.2 44.7 672.7 45.1 678.7 45.9C684.7 46.7 689.7 47.9 696.6 49.1C703.5 50.4 711.1 51.6 720.0 53.4C728.9 55.1 740.8 57.1 750.0 59.6C759.2 62.1 766.7 64.8 775.0 68.2C783.3 71.6 791.7 75.9 800.0 80.2C808.3 84.5 816.7 88.8 825.0 93.9C833.3 99.0 840.8 104.8 850.0 111.0C859.2 117.2 870.8 124.8 880.0 131.0C889.2 137.2 900.8 145.2 905.0 148.0" stroke="#e4a1a1" stroke-width="3.9" fill="none" stroke-linecap="round"/>
<path d="M651.7 0.0C651.7 3.0 651.7 14.0 651.8 18.0C651.9 22.0 651.7 21.5 652.3 24.0C652.9 26.5 653.6 30.6 655.3 33.0C657.0 35.4 658.6 36.7 662.5 38.3C666.4 39.9 672.5 41.2 678.7 42.6C685.0 44.0 692.3 45.0 700.0 46.6C707.7 48.2 716.7 50.0 725.0 52.0C733.3 54.0 741.7 56.3 750.0 58.9C758.3 61.5 770.8 66.1 775.0 67.6" stroke="#e4a1a1" stroke-width="3.4" fill="none" stroke-linecap="round"/>
<path d="M823.0 0.0C823.8 1.2 824.6 2.8 827.5 7.0C830.4 11.2 834.8 16.6 840.5 25.0C846.2 33.4 855.0 47.1 862.0 57.5C869.0 67.9 877.2 80.3 882.3 87.5C887.4 94.7 888.9 96.7 892.5 100.5C896.1 104.3 899.4 105.1 904.0 110.5C908.6 115.9 913.5 123.8 920.0 133.0C926.5 142.2 932.7 152.9 943.0 165.4C953.3 177.9 968.8 193.3 981.6 208.0C994.4 222.7 1007.0 239.7 1020.0 253.4C1033.0 267.1 1044.7 275.8 1059.6 290.0C1074.5 304.2 1096.7 326.4 1109.5 338.4C1122.3 350.4 1129.7 355.8 1136.4 361.9C1143.2 368.0 1137.6 363.0 1150.0 375.3C1162.4 387.6 1189.8 414.7 1211.0 435.6C1232.2 456.6 1263.8 487.9 1277.0 501.0C1290.2 514.1 1287.8 511.8 1290.0 514.0" stroke="#e4a1a1" stroke-width="4.3" fill="none" stroke-linecap="round"/>
<path d="M803.0 0.0C803.8 1.2 804.5 2.8 807.5 7.0C810.5 11.2 815.2 15.8 821.0 25.0C826.8 34.2 836.3 52.5 842.2 62.5C848.1 72.5 851.0 77.2 856.5 85.0C862.0 92.8 867.4 98.9 875.5 109.4C883.6 119.9 893.8 134.1 905.0 148.0C916.2 161.9 930.2 179.0 943.0 192.9C955.8 206.8 968.8 218.2 981.6 231.5C994.4 244.8 1006.1 258.3 1020.0 272.4C1033.9 286.5 1048.0 299.4 1064.8 316.0C1081.5 332.6 1101.8 353.1 1120.7 372.0C1139.6 390.9 1150.0 401.4 1178.2 429.4C1206.5 457.4 1271.4 521.6 1290.0 540.0" stroke="#e4a1a1" stroke-width="4.3" fill="none" stroke-linecap="round"/>
<path d="M1018.8 11.0C1018.8 15.8 1018.8 26.8 1018.8 40.0C1018.8 53.2 1018.9 71.7 1019.0 90.0C1019.1 108.3 1019.0 135.2 1019.5 150.0C1020.0 164.8 1020.8 169.6 1022.2 179.0C1023.6 188.4 1025.7 198.2 1028.0 206.7C1030.3 215.2 1033.2 222.8 1036.0 230.0C1038.8 237.2 1041.7 244.4 1044.6 250.0C1047.5 255.6 1048.4 256.7 1053.6 263.4C1058.8 270.1 1068.5 281.7 1075.9 290.3C1083.4 298.9 1090.8 306.6 1098.3 314.9C1105.8 323.2 1114.9 333.6 1120.7 340.0C1126.5 346.4 1128.8 348.9 1133.0 353.5C1137.2 358.1 1140.5 361.7 1146.0 367.5C1151.5 373.3 1158.7 380.8 1166.0 388.5C1173.3 396.2 1186.0 409.3 1190.0 413.5" stroke="#e4a1a1" stroke-width="3.6" fill="none" stroke-linecap="round"/>
<path d="M893.0 15.5C894.2 15.8 894.7 16.5 900.0 17.5C905.3 18.5 916.7 20.5 925.0 21.5C933.3 22.5 941.7 23.4 950.0 23.8C958.3 24.1 967.7 23.4 975.0 23.6C982.3 23.8 989.0 23.7 994.0 25.0C999.0 26.3 1002.1 27.7 1005.0 31.5C1007.9 35.3 1009.9 40.8 1011.3 48.0C1012.7 55.2 1013.7 66.3 1013.3 75.0C1012.9 83.7 1011.8 92.9 1009.0 100.0C1006.2 107.1 1001.8 113.0 996.5 117.5C991.2 122.0 983.9 124.9 977.0 127.0C970.1 129.1 962.0 130.0 955.0 130.0C948.0 130.0 941.7 129.2 935.0 127.0C928.3 124.8 920.7 120.3 915.0 117.0C909.3 113.7 904.7 109.8 901.0 107.0C897.3 104.2 894.3 101.6 893.0 100.5" stroke="#e4a1a1" stroke-width="3.4" fill="none" stroke-linecap="round"/>
<g transform="translate(515.0 15.0)"><path d="M-6.3 -5.3Q0 -4.5 6.3 -5.3C7 0 5.4 3.7 0 5.5C-5.4 3.7 -7 0 -6.3 -5.3Z" fill="#41709f" stroke="#e3e7eb" stroke-width=".6"/><path d="M-6.3 -5.3Q0 -4.5 6.3 -5.3L6.4 -3Q0 -2.3 -6.4 -3Z" fill="#c4555a"/><text x="-0.2" y="3.2" text-anchor="middle" font-family="Liberation Sans" font-weight="700" font-size="7" letter-spacing="-.4" fill="#fff">15</text></g>
<g transform="translate(513.4 65.2)"><path d="M-6.3 -5.3Q0 -4.5 6.3 -5.3C7 0 5.4 3.7 0 5.5C-5.4 3.7 -7 0 -6.3 -5.3Z" fill="#41709f" stroke="#e3e7eb" stroke-width=".6"/><path d="M-6.3 -5.3Q0 -4.5 6.3 -5.3L6.4 -3Q0 -2.3 -6.4 -3Z" fill="#c4555a"/><text x="-0.2" y="3.2" text-anchor="middle" font-family="Liberation Sans" font-weight="700" font-size="7" letter-spacing="-.4" fill="#fff">15</text></g>
<g transform="translate(1009.8 262.0)"><path d="M-6.3 -5.3Q0 -4.5 6.3 -5.3C7 0 5.4 3.7 0 5.5C-5.4 3.7 -7 0 -6.3 -5.3Z" fill="#41709f" stroke="#e3e7eb" stroke-width=".6"/><path d="M-6.3 -5.3Q0 -4.5 6.3 -5.3L6.4 -3Q0 -2.3 -6.4 -3Z" fill="#c4555a"/><text x="-0.2" y="3.2" text-anchor="middle" font-family="Liberation Sans" font-weight="700" font-size="7" letter-spacing="-.4" fill="#fff">15</text></g>
<g transform="translate(1183.5 433.0)"><path d="M-6.3 -5.3Q0 -4.5 6.3 -5.3C7 0 5.4 3.7 0 5.5C-5.4 3.7 -7 0 -6.3 -5.3Z" fill="#41709f" stroke="#e3e7eb" stroke-width=".6"/><path d="M-6.3 -5.3Q0 -4.5 6.3 -5.3L6.4 -3Q0 -2.3 -6.4 -3Z" fill="#c4555a"/><text x="-0.2" y="3.2" text-anchor="middle" font-family="Liberation Sans" font-weight="700" font-size="7" letter-spacing="-.4" fill="#fff">15</text></g>
<g transform="translate(549.0 50.5)"><path d="M-5.4 -4.8Q-2.7 -3.4 0 -5.1Q2.7 -3.4 5.4 -4.8Q7.1 -1.4 5.7 1.4Q6.4 3.4 4.6 4.7Q2 3.8 0 5.1Q-2 3.8 -4.6 4.7Q-6.4 3.4 -5.7 1.4Q-7.1 -1.4 -5.4 -4.8Z" fill="#fcfcfa" stroke="#9a9a95" stroke-width=".7"/><text x="-0.2" y="2.5" text-anchor="middle" font-family="Liberation Sans" font-weight="700" font-size="6.6" letter-spacing="-.3" fill="#333">12</text></g>
<g transform="translate(894.0 14.4)"><path d="M-5.4 -4.8Q-2.7 -3.4 0 -5.1Q2.7 -3.4 5.4 -4.8Q7.1 -1.4 5.7 1.4Q6.4 3.4 4.6 4.7Q2 3.8 0 5.1Q-2 3.8 -4.6 4.7Q-6.4 3.4 -5.7 1.4Q-7.1 -1.4 -5.4 -4.8Z" fill="#fcfcfa" stroke="#9a9a95" stroke-width=".7"/><text x="-0.2" y="2.5" text-anchor="middle" font-family="Liberation Sans" font-weight="700" font-size="6.6" letter-spacing="-.3" fill="#333">12</text></g>
<g transform="translate(1236.8 9.4)"><path d="M-5.4 -4.8Q-2.7 -3.4 0 -5.1Q2.7 -3.4 5.4 -4.8Q7.1 -1.4 5.7 1.4Q6.4 3.4 4.6 4.7Q2 3.8 0 5.1Q-2 3.8 -4.6 4.7Q-6.4 3.4 -5.7 1.4Q-7.1 -1.4 -5.4 -4.8Z" fill="#fcfcfa" stroke="#9a9a95" stroke-width=".7"/><text x="-0.2" y="2.5" text-anchor="middle" font-family="Liberation Sans" font-weight="700" font-size="6.6" letter-spacing="-.3" fill="#333">12</text></g>
</svg>
<svg style="position:absolute;left:393px;top:6px" width="884" height="572.5" viewBox="393 6 884 572.5">
<text x="553.6" y="135.7" font-family="Liberation Serif" font-size="7.5" font-weight="700" font-style="normal" text-anchor="middle" fill="#4c4b47" stroke="#efeee6" stroke-width="1.2" paint-order="stroke" stroke-linejoin="round" textLength="26.2" lengthAdjust="spacing" transform="rotate(-0.6 553.6 135.7)">11th Ave</text>
<text x="553.9" y="200.0" font-family="Liberation Serif" font-size="7.5" font-weight="700" font-style="normal" text-anchor="middle" fill="#4c4b47" stroke="#efeee6" stroke-width="1.2" paint-order="stroke" stroke-linejoin="round" textLength="24.2" lengthAdjust="spacing" transform="rotate(-0.6 553.9 200.0)">9th Ave</text>
<text x="553.9" y="291.3" font-family="Liberation Serif" font-size="7.5" font-weight="700" font-style="normal" text-anchor="middle" fill="#4c4b47" stroke="#efeee6" stroke-width="1.2" paint-order="stroke" stroke-linejoin="round" textLength="24.2" lengthAdjust="spacing" transform="rotate(-0.6 553.9 291.3)">8th Ave</text>
<text x="554.0" y="407.0" font-family="Liberation Serif" font-size="7.5" font-weight="700" font-style="normal" text-anchor="middle" fill="#4c4b47" stroke="#efeee6" stroke-width="1.2" paint-order="stroke" stroke-linejoin="round" textLength="30.5" lengthAdjust="spacing" transform="rotate(-0.6 554.0 407.0)">E 6th Ave</text>
<text x="553.9" y="489.3" font-family="Liberation Serif" font-size="7.5" font-weight="700" font-style="normal" text-anchor="middle" fill="#4c4b47" stroke="#efeee6" stroke-width="1.2" paint-order="stroke" stroke-linejoin="round" textLength="24.2" lengthAdjust="spacing" transform="rotate(-0.6 553.9 489.3)">5th Ave</text>
<text x="750.2" y="487.7" font-family="Liberation Serif" font-size="7.5" font-weight="700" font-style="normal" text-anchor="middle" fill="#4c4b47" stroke="#efeee6" stroke-width="1.2" paint-order="stroke" stroke-linejoin="round" textLength="23.0" lengthAdjust="spacing" transform="rotate(-0.6 750.2 487.7)">5th Ave</text>
<text x="553.9" y="572.3" font-family="Liberation Serif" font-size="7.5" font-weight="700" font-style="normal" text-anchor="middle" fill="#4c4b47" stroke="#efeee6" stroke-width="1.2" paint-order="stroke" stroke-linejoin="round" textLength="36.7" lengthAdjust="spacing" transform="rotate(-0.6 553.9 572.3)">Lockey Ave</text>
<text x="394.0" y="64.0" font-family="Liberation Serif" font-size="7.5" font-weight="700" font-style="normal" text-anchor="middle" fill="#4c4b47" stroke="#efeee6" stroke-width="1.2" paint-order="stroke" stroke-linejoin="round" textLength="24.8" lengthAdjust="spacing" transform="rotate(90 394.0 64.0)">N Fee St</text>
<text x="397.6" y="176.0" font-family="Liberation Serif" font-size="7.5" font-weight="700" font-style="normal" text-anchor="middle" fill="#4c4b47" stroke="#efeee6" stroke-width="1.2" paint-order="stroke" stroke-linejoin="round" textLength="27.0" lengthAdjust="spacing" transform="rotate(90 397.6 176.0)">N Fee St</text>
<text x="513.8" y="173.8" font-family="Liberation Serif" font-size="7.5" font-weight="700" font-style="normal" text-anchor="middle" fill="#4c4b47" stroke="#efeee6" stroke-width="1.2" paint-order="stroke" stroke-linejoin="round" textLength="54.9" lengthAdjust="spacing" transform="rotate(90 513.8 173.8)">N Washington St</text>
<text x="630.4" y="173.4" font-family="Liberation Serif" font-size="7.5" font-weight="700" font-style="normal" text-anchor="middle" fill="#4c4b47" stroke="#efeee6" stroke-width="1.2" paint-order="stroke" stroke-linejoin="round" textLength="39.2" lengthAdjust="spacing" transform="rotate(90 630.4 173.4)">N Oregon St</text>
<text x="747.7" y="172.1" font-family="Liberation Serif" font-size="7.5" font-weight="700" font-style="normal" text-anchor="middle" fill="#4c4b47" stroke="#efeee6" stroke-width="1.2" paint-order="stroke" stroke-linejoin="round" textLength="49.1" lengthAdjust="spacing" transform="rotate(90 747.7 172.1)">N California St</text>
<text x="399.0" y="378.8" font-family="Liberation Serif" font-size="7.5" font-weight="700" font-style="normal" text-anchor="middle" fill="#4c4b47" stroke="#efeee6" stroke-width="1.2" paint-order="stroke" stroke-linejoin="round" textLength="27.5" lengthAdjust="spacing" transform="rotate(90 399.0 378.8)">N Fee St</text>
<text x="632.1" y="378.1" font-family="Liberation Serif" font-size="7.5" font-weight="700" font-style="normal" text-anchor="middle" fill="#4c4b47" stroke="#efeee6" stroke-width="1.2" paint-order="stroke" stroke-linejoin="round" textLength="38.7" lengthAdjust="spacing" transform="rotate(90 632.1 378.1)">N Oregon St</text>
<text x="749.7" y="378.8" font-family="Liberation Serif" font-size="7.5" font-weight="700" font-style="normal" text-anchor="middle" fill="#4c4b47" stroke="#efeee6" stroke-width="1.2" paint-order="stroke" stroke-linejoin="round" textLength="48.5" lengthAdjust="spacing" transform="rotate(90 749.7 378.8)">N California St</text>
<text x="751.8" y="595.8" font-family="Liberation Serif" font-size="7.5" font-weight="700" font-style="normal" text-anchor="middle" fill="#4c4b47" stroke="#efeee6" stroke-width="1.2" paint-order="stroke" stroke-linejoin="round" textLength="48.5" lengthAdjust="spacing" transform="rotate(90 751.8 595.8)">N California St</text>
<text x="418.4" y="129.0" font-family="Liberation Serif" font-size="7.1" font-weight="700" font-style="normal" text-anchor="middle" fill="#4c4b47" stroke="#efeee6" stroke-width="1.2" paint-order="stroke" stroke-linejoin="round" textLength="26.5" lengthAdjust="spacing" transform="rotate(33 418.4 129.0)">11th Ave</text>
<text x="1147.7" y="462.7" font-family="Liberation Serif" font-size="7.1" font-weight="700" font-style="normal" text-anchor="middle" fill="#4c4b47" stroke="#efeee6" stroke-width="1.2" paint-order="stroke" stroke-linejoin="round" textLength="38.0" lengthAdjust="spacing" transform="rotate(45 1147.7 462.7)">Colonial Dr</text>
<text x="979.0" y="296.7" font-family="Liberation Serif" font-size="7.1" font-weight="700" font-style="normal" text-anchor="middle" fill="#4c4b47" stroke="#efeee6" stroke-width="1.2" paint-order="stroke" stroke-linejoin="round" textLength="38.0" lengthAdjust="spacing" transform="rotate(45 979.0 296.7)">Colonial Dr</text>
<text x="461.5" y="90.6" font-family="Liberation Sans" font-size="7.6" font-weight="700" font-style="normal" text-anchor="middle" fill="#56504e" stroke="#f0c4c1" stroke-width="1.2" paint-order="stroke" stroke-linejoin="round" textLength="33.5" lengthAdjust="spacing" transform="rotate(-22.8 461.5 90.6)">I-15-BR E</text>
<text x="860.5" y="418.3" font-family="Liberation Sans" font-size="8.4" font-weight="400" font-style="italic" text-anchor="middle" fill="#76756f" stroke="#f2f1ea" stroke-width="1.4" paint-order="stroke" stroke-linejoin="round" textLength="45.0" lengthAdjust="spacing">Smith School</text>
</svg>
<div style="position:absolute;left:393px;top:6px;width:1px;height:572.5px;background:rgba(60,60,58,.55)"></div>
<div style="position:absolute;left:400.2px;top:13.2px;width:19.7px;height:19.6px;background:rgba(42,40,38,0.6)"><svg width="19.7" height="19.6" viewBox="0 0 20 20" preserveAspectRatio="none" style="position:absolute;left:0;top:0"><path d="M4.8 9.6H15.2M10 4.4V14.8" stroke="#fff" stroke-width="1.7"/></svg></div>
<div style="position:absolute;left:400.2px;top:37px;width:19.7px;height:19.3px;background:rgba(42,40,38,0.6)"><svg width="19.7" height="19.3" viewBox="0 0 20 20" preserveAspectRatio="none" style="position:absolute;left:0;top:0"><path d="M6 9.6H14" stroke="#fff" stroke-width="1.7"/></svg></div>
<div style="position:absolute;left:400.2px;top:60.2px;width:19.7px;height:19.7px;background:rgba(42,40,38,0.6)"><svg width="19.7" height="19.7" viewBox="0 0 20 20" preserveAspectRatio="none" style="position:absolute;left:0;top:0"><path d="M10 3.6L3.2 10.2H5.2V16H8.6V12H11.4V16H14.8V10.2H16.8Z" fill="#fff"/><path d="M13.2 4.6h1.6v3l-1.6-1.5z" fill="#fff"/></svg></div>
<div style="position:absolute;left:400.2px;top:130.3px;width:19.7px;height:19.5px;background:rgba(42,40,38,0.6)"><svg width="19.7" height="19.5" viewBox="0 0 20 20" preserveAspectRatio="none" style="position:absolute;left:0;top:0"><circle cx="10" cy="10" r="6" fill="none" stroke="#fff" stroke-width="1.5"/><path d="M10 3.4V7M10 13V16.6M3.4 10H7M13 10H16.6" stroke="#fff" stroke-width="1.5"/><circle cx="10" cy="10" r="3.6" fill="rgba(60,60,60,.55)"/></svg></div>
<div style="position:absolute;left:427px;top:13.2px;width:23.7px;height:23.6px;background:rgba(42,40,38,0.6)"><svg width="23.7" height="23.6" viewBox="0 0 24 24" preserveAspectRatio="none" style="position:absolute;left:0;top:0"><path d="M6 6.8h5v5h-5zM12.3 6.8h5v5h-5zM6 13h5v5h-5zM12.3 13h5v5h-5z" fill="#fff"/></svg></div>
<div style="position:absolute;left:457px;top:13.2px;width:23.9px;height:23.6px;background:rgba(42,40,38,0.6)"><svg width="23.9" height="23.6" viewBox="0 0 24 24" preserveAspectRatio="none" style="position:absolute;left:0;top:0"><path d="M8.3 7.8H17.5M8.3 12H17.5M8.3 16.2H17.5" stroke="#e9e9e9" stroke-width="1.4"/><path d="M5.6 7.1h1.6v1.5h-1.6zM5.6 11.3h1.6v1.5h-1.6zM5.6 15.5h1.6v1.5h-1.6z" fill="#fff"/></svg></div>
<div style="position:absolute;left:486.9px;top:13.2px;width:23.9px;height:23.6px;background:rgba(42,40,38,0.6)"><svg width="23.9" height="23.6" viewBox="0 0 24 24" preserveAspectRatio="none" style="position:absolute;left:0;top:0"><circle cx="11.6" cy="14.2" r="2.1" fill="#fff"/><path d="M11.6 14.2V9M11.6 14.2L7.8 11M11.6 14.2L15.4 11" stroke="#e6e6e6" stroke-width=".8"/><circle cx="11.6" cy="8.8" r=".9" fill="#fff"/><circle cx="7.6" cy="10.8" r=".9" fill="#fff"/><circle cx="15.6" cy="10.8" r=".9" fill="#fff"/></svg></div>
<div style="position:absolute;left:1088px;top:14px;width:182px;height:22px;background:#222;border-radius:2px"></div>
<div style="position:absolute;left:1247px;top:14px;width:1px;height:22px;background:#3c3c3c"></div>
<svg style="position:absolute;left:1252px;top:18px" width="14" height="14" viewBox="0 0 14 14"><circle cx="5.4" cy="5.4" r="3.5" fill="none" stroke="#fff" stroke-width="1.6"/><path d="M8 8L12.3 12.3" stroke="#fff" stroke-width="2"/></svg>
<svg style="position:absolute;left:396px;top:545px" width="95" height="16" viewBox="396 545 95 16"><path d="M399.3 552.4V548.5H472V552.4" fill="none" stroke="#f6f6f2" stroke-width="2.8" opacity=".7"/><path d="M400.4 550.1H470.9" fill="none" stroke="#fff" stroke-width="1.3"/><path d="M399.3 552.2V548.6H472V552.2" fill="none" stroke="#404040" stroke-width="1.4"/><text x="467.6" y="557.8" font-family="Liberation Sans" font-size="8.6" fill="#333" stroke="#fff" stroke-width="2" paint-order="stroke" textLength="18.5" lengthAdjust="spacingAndGlyphs">300ft</text></svg>
<svg style="position:absolute;left:618px;top:570px" width="46" height="11" viewBox="618 570 46 11"><path d="M620.5 578.6V575Q620.5 572 623.5 572H657Q660 572 660 575V578.6Z" fill="rgba(38,38,36,.87)"/><path d="M636.9 578.7L640 575.8L643.1 578.7Z" fill="#d2d2d2"/><path d="M619.8 578.6h1.5v2.4h-1.5zM659.6 578.6h1.5v2.4h-1.5z" fill="#6f6f6f"/></svg>
<div style="position:absolute;left:829.6px;top:566px;width:397.4px;height:10px;background:rgba(255,255,255,.72)"></div>
<div style="position:absolute;left:1240.3px;top:542.2px;width:19.6px;height:19.6px;background:#4a4a4a;border-radius:2.5px"><svg width="19.6" height="19.6" viewBox="0 0 19.6 19.6" style="position:absolute;left:0;top:0"><path d="M4.6 8V4.8H7.8M11.8 4.8H15V8M15 11.6V14.8H11.8M7.8 14.8H4.6V11.6" fill="none" stroke="#fff" stroke-width="1.7"/></svg></div>
<svg style="position:absolute;left:743.21px;top:220.11px" width="12.18" height="13.92" viewBox="-7 -7 14 16"><defs><radialGradient id="pg" cx="45%" cy="30%" r="75%"><stop offset="0" stop-color="#ffa31f"/><stop offset="1" stop-color="#f18a06"/></radialGradient></defs><path d="M0 7.7C-1 4.9 -4.9 3.7 -4.9 0A4.9 4.9 0 1 1 4.9 0C4.9 3.7 1 4.9 0 7.7Z" fill="url(#pg)" stroke="#e08310" stroke-width="0.5"/></svg>
<div style="position:absolute;left:742.1px;top:188.5px;width:8.5px;height:100.4px;border:1.6px solid #12eef6;background:rgba(0,255,255,.03)"></div>
<div style="position:absolute;left:763.6px;top:110.3px;width:179.0px;height:236.9px;background:#222;border-radius:4px 4px 3.5px 3.5px;box-shadow:0 1px 3px rgba(0,0,0,.35)"></div>
<div style="position:absolute;left:763.6px;top:110.3px;width:179.0px;height:13px;background:#3d3d3d;border-radius:4px 4px 0 0"></div>
<div style="position:absolute;left:939.4px;top:123.3px;width:3.2px;height:181.5px;background:linear-gradient(90deg,#9c9c9c,#7c7c7c)"></div>
<div style="position:absolute;left:939px;top:304.5px;width:3.6px;height:29px;background:#000"></div>
<svg style="position:absolute;left:755px;top:220px" width="10" height="17" viewBox="755 220 10 17"><path d="M764.2 220.8L755.7 228.3L764.2 235.8Z" fill="#222"/></svg>
<svg style="position:absolute;left:919px;top:112px" width="24" height="10" viewBox="919 112 24 10"><path d="M921.6 114.2H928.4V119.4H921.6Z" fill="none" stroke="#fff" stroke-width="1"/><path d="M921.2 114.4H928.8" stroke="#fff" stroke-width="1.8"/><path d="M934.2 113.8L940.2 119.8M940.2 113.8L934.2 119.8" stroke="#fff" stroke-width="1.5"/></svg>
<div style="position:absolute;left:770px;top:143.3px;width:165px;height:1px;background:#454545"></div>
<div id="clip" style="position:absolute;left:765px;top:324px;width:172px;height:10.3px;overflow:hidden"><span style="position:absolute;left:6.60px;top:1.64px;white-space:pre;font-family:'Liberation Sans',sans-serif;font-size:9.4px;line-height:9.4px;font-weight:400;font-style:normal;color:#8e8e8e;transform:scaleX(0.8318);transform-origin:0 0;">Shape__Area</span><span style="position:absolute;left:67.40px;top:1.64px;white-space:pre;font-family:'Liberation Sans',sans-serif;font-size:9.4px;line-height:9.4px;font-weight:400;font-style:normal;color:#fff;transform:scaleX(0.8913);transform-origin:0 0;">2932.187500</span></div>
<svg style="position:absolute;left:918px;top:337px" width="14" height="5" viewBox="0 0 14 5"><circle cx="2.2" cy="2.5" r="1.15" fill="#aaa"/><circle cx="6.6" cy="2.5" r="1.15" fill="#aaa"/><circle cx="11" cy="2.5" r="1.15" fill="#aaa"/></svg>
<span style="position:absolute;left:1096.00px;top:19.53px;white-space:pre;font-family:'Liberation Sans',sans-serif;font-size:10.6px;line-height:10.6px;font-weight:400;font-style:normal;color:#a4a4a4;transform:scaleX(0.8815);transform-origin:0 0;">Find address or place</span>
<span style="position:absolute;left:833.50px;top:566.65px;white-space:pre;font-family:'Liberation Sans',sans-serif;font-size:8.8px;line-height:8.8px;font-weight:400;font-style:normal;color:#323232;">Esri Community Maps Contributors, County of Lewis and Clark, © OpenStreetMap, Microsoft, Esri…</span>
<span style="position:absolute;left:1238.00px;top:558.55px;white-space:pre;font-family:'Liberation Sans',sans-serif;font-size:3.6px;line-height:3.6px;font-weight:700;font-style:normal;color:#fff;transform:scaleX(1.0585);transform-origin:0 0;opacity:.85;">POWERED BY</span>
<span style="position:absolute;left:1232.30px;top:554.77px;white-space:pre;font-family:'Liberation Sans',sans-serif;font-size:22.6px;line-height:22.6px;font-weight:700;font-style:normal;color:#fff;transform:scaleX(0.9701);transform-origin:0 0;text-shadow:0 0 2px rgba(0,0,0,.3);-webkit-text-stroke:0.7px #fff;">esri</span>
<span style="position:absolute;left:770.00px;top:129.57px;white-space:pre;font-family:'Liberation Sans',sans-serif;font-size:9.6px;line-height:9.6px;font-weight:700;font-style:normal;color:#fff;transform:scaleX(0.7950);transform-origin:0 0;">Transportation</span>
<span style="position:absolute;left:771.60px;top:149.04px;white-space:pre;font-family:'Liberation Sans',sans-serif;font-size:9.4px;line-height:9.4px;font-weight:400;font-style:normal;color:#8e8e8e;transform:scaleX(0.8348);transform-origin:0 0;">OBJECTID</span>
<span style="position:absolute;left:832.40px;top:149.04px;white-space:pre;font-family:'Liberation Sans',sans-serif;font-size:9.4px;line-height:9.4px;font-weight:400;font-style:normal;color:#fff;transform:scaleX(0.9293);transform-origin:0 0;">40</span>
<span style="position:absolute;left:771.60px;top:163.04px;white-space:pre;font-family:'Liberation Sans',sans-serif;font-size:9.4px;line-height:9.4px;font-weight:400;font-style:normal;color:#8e8e8e;transform:scaleX(0.8637);transform-origin:0 0;">NAME</span>
<span style="position:absolute;left:832.40px;top:163.04px;white-space:pre;font-family:'Liberation Sans',sans-serif;font-size:9.4px;line-height:9.4px;font-weight:400;font-style:normal;color:#fff;transform:scaleX(0.8572);transform-origin:0 0;">Asphalt Repair - Street</span>
<span style="position:absolute;left:832.40px;top:172.34px;white-space:pre;font-family:'Liberation Sans',sans-serif;font-size:9.4px;line-height:9.4px;font-weight:400;font-style:normal;color:#fff;transform:scaleX(0.8789);transform-origin:0 0;">Closure</span>
<span style="position:absolute;left:771.60px;top:186.34px;white-space:pre;font-family:'Liberation Sans',sans-serif;font-size:9.4px;line-height:9.4px;font-weight:400;font-style:normal;color:#8e8e8e;transform:scaleX(0.8595);transform-origin:0 0;">LOCATION</span>
<span style="position:absolute;left:832.40px;top:186.34px;white-space:pre;font-family:'Liberation Sans',sans-serif;font-size:9.4px;line-height:9.4px;font-weight:400;font-style:normal;color:#fff;transform:scaleX(0.8706);transform-origin:0 0;">N California St. from 9th</span>
<span style="position:absolute;left:832.40px;top:195.64px;white-space:pre;font-family:'Liberation Sans',sans-serif;font-size:9.4px;line-height:9.4px;font-weight:400;font-style:normal;color:#fff;transform:scaleX(0.8735);transform-origin:0 0;">Ave to 8th Ave.</span>
<span style="position:absolute;left:771.60px;top:209.44px;white-space:pre;font-family:'Liberation Sans',sans-serif;font-size:9.4px;line-height:9.4px;font-weight:400;font-style:normal;color:#8e8e8e;transform:scaleX(0.7938);transform-origin:0 0;">STARTDATE</span>
<span style="position:absolute;left:832.40px;top:209.44px;white-space:pre;font-family:'Liberation Sans',sans-serif;font-size:9.4px;line-height:9.4px;font-weight:400;font-style:normal;color:#fff;transform:scaleX(0.9003);transform-origin:0 0;">5/10/2022, 12:00 AM</span>
<span style="position:absolute;left:771.60px;top:223.34px;white-space:pre;font-family:'Liberation Sans',sans-serif;font-size:9.4px;line-height:9.4px;font-weight:400;font-style:normal;color:#8e8e8e;transform:scaleX(0.8298);transform-origin:0 0;">ENDDATE</span>
<span style="position:absolute;left:832.40px;top:223.34px;white-space:pre;font-family:'Liberation Sans',sans-serif;font-size:9.4px;line-height:9.4px;font-weight:400;font-style:normal;color:#fff;transform:scaleX(0.9075);transform-origin:0 0;">5/11/2022, 12:00 AM</span>
<span style="position:absolute;left:771.60px;top:237.44px;white-space:pre;font-family:'Liberation Sans',sans-serif;font-size:9.4px;line-height:9.4px;font-weight:400;font-style:normal;color:#8e8e8e;transform:scaleX(0.7347);transform-origin:0 0;">TYPE</span>
<span style="position:absolute;left:832.40px;top:237.44px;white-space:pre;font-family:'Liberation Sans',sans-serif;font-size:9.4px;line-height:9.4px;font-weight:400;font-style:normal;color:#fff;transform:scaleX(0.8801);transform-origin:0 0;">Transportation</span>
<span style="position:absolute;left:771.60px;top:251.44px;white-space:pre;font-family:'Liberation Sans',sans-serif;font-size:9.4px;line-height:9.4px;font-weight:400;font-style:normal;color:#8e8e8e;transform:scaleX(0.7840);transform-origin:0 0;">DETAILS</span>
<span style="position:absolute;left:832.40px;top:251.44px;white-space:pre;font-family:'Liberation Sans',sans-serif;font-size:9.4px;line-height:9.4px;font-weight:400;font-style:normal;color:#fff;transform:scaleX(0.8850);transform-origin:0 0;">N California will be closed</span>
<span style="position:absolute;left:832.40px;top:260.74px;white-space:pre;font-family:'Liberation Sans',sans-serif;font-size:9.4px;line-height:9.4px;font-weight:400;font-style:normal;color:#fff;transform:scaleX(0.8900);transform-origin:0 0;">for repairs on 5/10/2022</span>
<span style="position:absolute;left:832.40px;top:270.04px;white-space:pre;font-family:'Liberation Sans',sans-serif;font-size:9.4px;line-height:9.4px;font-weight:400;font-style:normal;color:#fff;transform:scaleX(0.8786);transform-origin:0 0;">from 9:00 a.m. to 3:00 p.m.</span>
<span style="position:absolute;left:832.40px;top:279.34px;white-space:pre;font-family:'Liberation Sans',sans-serif;font-size:9.4px;line-height:9.4px;font-weight:400;font-style:normal;color:#fff;transform:scaleX(0.8758);transform-origin:0 0;">Traffic Control Signage will</span>
<span style="position:absolute;left:832.40px;top:288.64px;white-space:pre;font-family:'Liberation Sans',sans-serif;font-size:9.4px;line-height:9.4px;font-weight:400;font-style:normal;color:#fff;transform:scaleX(0.8911);transform-origin:0 0;">be in place to reroute</span>
<span style="position:absolute;left:832.40px;top:297.94px;white-space:pre;font-family:'Liberation Sans',sans-serif;font-size:9.4px;line-height:9.4px;font-weight:400;font-style:normal;color:#fff;transform:scaleX(0.8754);transform-origin:0 0;">traffic.</span>
<span style="position:absolute;left:771.60px;top:312.04px;white-space:pre;font-family:'Liberation Sans',sans-serif;font-size:9.4px;line-height:9.4px;font-weight:400;font-style:normal;color:#8e8e8e;transform:scaleX(0.7839);transform-origin:0 0;">DISPLAY</span>
<span style="position:absolute;left:770.00px;top:334.64px;white-space:pre;font-family:'Liberation Sans',sans-serif;font-size:9.4px;line-height:9.4px;font-weight:400;font-style:normal;color:#3c6aa6;transform:scaleX(0.8869);transform-origin:0 0;text-decoration:underline;">Zoom to</span>
</body></html>
